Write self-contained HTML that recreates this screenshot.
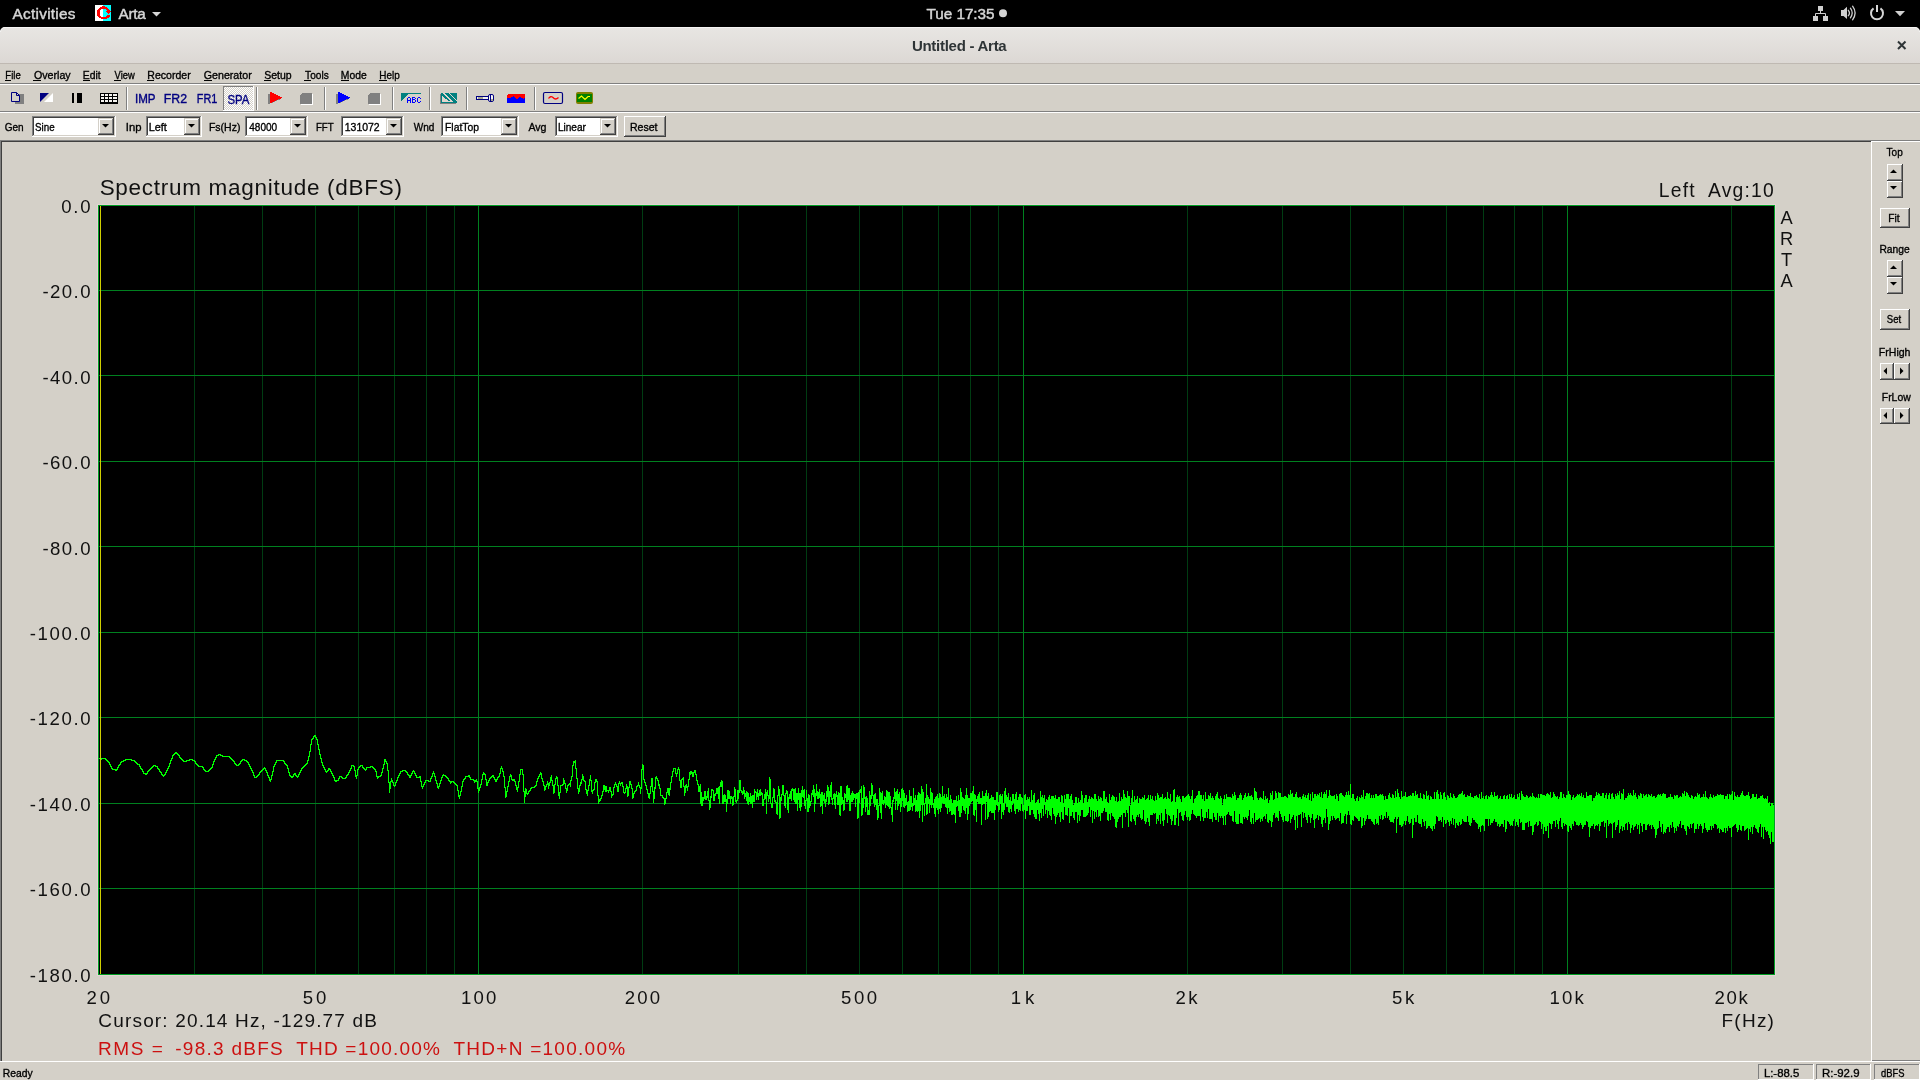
<!DOCTYPE html>
<html><head><meta charset="utf-8"><title>Untitled - Arta</title>
<style>html,body{margin:0;padding:0;width:1920px;height:1080px;overflow:hidden;background:#d4d0c8;font-family:"Liberation Sans",sans-serif}
text{font-family:"Liberation Sans",sans-serif}</style></head><body>
<svg width="1920" height="1080" viewBox="0 0 1920 1080" style="display:block;will-change:transform"><rect x="0" y="0" width="1920" height="1080" fill="#d4d0c8" />
<rect x="0" y="0" width="1920" height="36" fill="#000" />
<text x="12.60" y="19.00" font-size="15.3" fill="#d6d6d6" font-weight="normal" font-family="Liberation Sans" style="white-space:pre" textLength="62.90" lengthAdjust="spacing" stroke="#d6d6d6" stroke-width="0.45">Activities</text>
<rect x="95" y="5" width="8" height="16" fill="#ffffff" />
<rect x="103" y="5" width="8" height="16" fill="#00ffff" />
<rect x="102" y="6" width="3" height="1" fill="#ff0000" />
<rect x="100" y="7" width="7" height="1" fill="#ff0000" />
<rect x="99" y="8" width="9" height="1" fill="#ff0000" />
<rect x="98" y="9" width="3" height="1" fill="#ff0000" />
<rect x="106" y="9" width="3" height="1" fill="#ff0000" />
<rect x="97" y="10" width="3" height="1" fill="#ff0000" />
<rect x="107" y="10" width="3" height="1" fill="#ff0000" />
<rect x="97" y="11" width="3" height="1" fill="#ff0000" />
<rect x="106" y="11" width="5" height="1" fill="#ff0000" />
<rect x="97" y="12" width="3" height="1" fill="#ff0000" />
<rect x="107" y="12" width="3" height="1" fill="#ff0000" />
<rect x="97" y="13" width="3" height="1" fill="#ff0000" />
<rect x="108" y="13" width="1" height="1" fill="#ff0000" />
<rect x="97" y="14" width="3" height="1" fill="#ff0000" />
<rect x="97" y="15" width="3" height="1" fill="#ff0000" />
<rect x="107" y="15" width="3" height="1" fill="#ff0000" />
<rect x="98" y="16" width="3" height="1" fill="#ff0000" />
<rect x="106" y="16" width="4" height="1" fill="#ff0000" />
<rect x="99" y="17" width="10" height="1" fill="#ff0000" />
<rect x="101" y="18" width="6" height="1" fill="#ff0000" />
<text x="118.60" y="19.00" font-size="15.3" fill="#d6d6d6" font-weight="normal" font-family="Liberation Sans" style="white-space:pre" textLength="27.10" lengthAdjust="spacing" stroke="#d6d6d6" stroke-width="0.45">Arta</text>
<path d="M152 12 L161 12 L156.5 16.5 Z" fill="#d6d6d6"/>
<text x="926.60" y="19.00" font-size="15.3" fill="#d6d6d6" font-weight="normal" font-family="Liberation Sans" style="white-space:pre" textLength="67.90" lengthAdjust="spacing" stroke="#d6d6d6" stroke-width="0.45">Tue 17:35</text>
<circle cx="1003" cy="13.2" r="4" fill="#d6d6d6"/>
<rect x="1818" y="6" width="5" height="5" fill="#d0d0d0" />
<rect x="1813" y="16" width="5" height="5" fill="#d0d0d0" />
<rect x="1823" y="16" width="5" height="5" fill="#d0d0d0" />
<path d="M1820.5 11 V13.5 M1815.5 16 V13.5 H1825.5 V16" fill="none" stroke="#d0d0d0" stroke-width="1"/>
<path d="M1841 10 H1843.5 L1847 6.8 V19 L1843.5 16 H1841 Z" fill="#d0d0d0"/>
<path d="M1848.3 10.3 Q1850.6 13 1848.3 15.7 M1850.4 8.2 Q1854 13 1850.4 17.8 M1852.6 6.2 Q1857.6 13 1852.6 19.8" fill="none" stroke="#d0d0d0" stroke-width="1.3" stroke-linecap="round"/>
<path d="M1873.56 8.4 A6 6 0 1 0 1880.44 8.4" fill="none" stroke="#d6d6d6" stroke-width="2"/>
<path d="M1877 5 V12" stroke="#d6d6d6" stroke-width="2"/>
<path d="M1895 11 L1905 11 L1900 16.2 Z" fill="#d0d0d0"/>
<defs><linearGradient id="tg" x1="0" y1="0" x2="0" y2="1"><stop offset="0" stop-color="#e8e6e3"/><stop offset="1" stop-color="#dcd8d4"/></linearGradient></defs>
<path d="M0 63 V32 A5 5 0 0 1 5 27 H1915 A5 5 0 0 1 1920 32 V63 Z" fill="url(#tg)"/>
<path d="M0.5 32 A4.5 4.5 0 0 1 5 27.5 H1915 A4.5 4.5 0 0 1 1919.5 32" fill="none" stroke="#f6f5f4" stroke-width="1"/>
<rect x="0" y="63" width="1920" height="1" fill="#bfb9b2" />
<text x="911.90" y="51.00" font-size="15" fill="#2e3436" font-weight="bold" font-family="Liberation Sans" style="white-space:pre" textLength="94.80" lengthAdjust="spacing" >Untitled - Arta</text>
<path d="M1898 41.5 L1905.5 49 M1905.5 41.5 L1898 49" stroke="#2e3436" stroke-width="2"/>
<text x="5.30" y="79.00" font-size="11.5" fill="#000" font-weight="normal" font-family="Liberation Sans" style="white-space:pre" textLength="15.40" lengthAdjust="spacingAndGlyphs"  stroke="#000" stroke-width="0.35">File</text>
<rect x="5" y="80" width="6" height="1" fill="#000" />
<text x="33.95" y="79.00" font-size="11.5" fill="#000" font-weight="normal" font-family="Liberation Sans" style="white-space:pre" textLength="36.75" lengthAdjust="spacingAndGlyphs"  stroke="#000" stroke-width="0.35">Overlay</text>
<rect x="33" y="80" width="8" height="1" fill="#000" />
<text x="82.80" y="79.00" font-size="11.5" fill="#000" font-weight="normal" font-family="Liberation Sans" style="white-space:pre" textLength="17.90" lengthAdjust="spacingAndGlyphs"  stroke="#000" stroke-width="0.35">Edit</text>
<rect x="83" y="80" width="7" height="1" fill="#000" />
<text x="114.60" y="79.00" font-size="11.5" fill="#000" font-weight="normal" font-family="Liberation Sans" style="white-space:pre" textLength="20.10" lengthAdjust="spacingAndGlyphs"  stroke="#000" stroke-width="0.35">View</text>
<rect x="114" y="80" width="7" height="1" fill="#000" />
<text x="147.30" y="79.00" font-size="11.5" fill="#000" font-weight="normal" font-family="Liberation Sans" style="white-space:pre" textLength="43.40" lengthAdjust="spacingAndGlyphs"  stroke="#000" stroke-width="0.35">Recorder</text>
<rect x="147" y="80" width="7" height="1" fill="#000" />
<text x="203.80" y="79.00" font-size="11.5" fill="#000" font-weight="normal" font-family="Liberation Sans" style="white-space:pre" textLength="47.90" lengthAdjust="spacingAndGlyphs"  stroke="#000" stroke-width="0.35">Generator</text>
<rect x="204" y="80" width="8" height="1" fill="#000" />
<text x="264.30" y="79.00" font-size="11.5" fill="#000" font-weight="normal" font-family="Liberation Sans" style="white-space:pre" textLength="27.40" lengthAdjust="spacingAndGlyphs"  stroke="#000" stroke-width="0.35">Setup</text>
<rect x="264" y="80" width="7" height="1" fill="#000" />
<text x="305.10" y="79.00" font-size="11.5" fill="#000" font-weight="normal" font-family="Liberation Sans" style="white-space:pre" textLength="23.60" lengthAdjust="spacingAndGlyphs"  stroke="#000" stroke-width="0.35">Tools</text>
<rect x="304" y="80" width="7" height="1" fill="#000" />
<text x="340.80" y="79.00" font-size="11.5" fill="#000" font-weight="normal" font-family="Liberation Sans" style="white-space:pre" textLength="25.90" lengthAdjust="spacingAndGlyphs"  stroke="#000" stroke-width="0.35">Mode</text>
<rect x="341" y="80" width="8" height="1" fill="#000" />
<text x="379.30" y="79.00" font-size="11.5" fill="#000" font-weight="normal" font-family="Liberation Sans" style="white-space:pre" textLength="20.40" lengthAdjust="spacingAndGlyphs"  stroke="#000" stroke-width="0.35">Help</text>
<rect x="379" y="80" width="8" height="1" fill="#000" />
<rect x="0" y="83" width="1920" height="1" fill="#808080" />
<rect x="0" y="84" width="1920" height="1" fill="#ffffff" />
<rect x="15" y="94" width="9" height="10" fill="#808080" />
<path d="M11.5 92.5 H16.5 L19.5 95.5 V101.5 H11.5 Z" fill="#d4d0c8" stroke="#000080" stroke-width="1"/>
<path d="M16.5 92.5 V95.5 H19.5" fill="none" stroke="#000080" stroke-width="1"/>
<path d="M40 93 H49 L40 102 Z" fill="#000080"/>
<path d="M53 93 V102 H44 Z" fill="#ffffff"/>
<rect x="72" y="93" width="2" height="10" fill="#000" />
<rect x="77" y="93" width="5" height="10" fill="#000" />
<rect x="100" y="93" width="18" height="11" fill="#000" />
<rect x="101" y="94" width="3" height="2" fill="#f4f2ee" />
<rect x="101" y="97" width="3" height="2" fill="#f4f2ee" />
<rect x="101" y="100" width="3" height="2" fill="#f4f2ee" />
<rect x="105" y="94" width="3" height="2" fill="#f4f2ee" />
<rect x="105" y="97" width="3" height="2" fill="#f4f2ee" />
<rect x="105" y="100" width="3" height="2" fill="#f4f2ee" />
<rect x="109" y="94" width="3" height="2" fill="#f4f2ee" />
<rect x="109" y="97" width="3" height="2" fill="#f4f2ee" />
<rect x="109" y="100" width="3" height="2" fill="#f4f2ee" />
<rect x="113" y="94" width="4" height="2" fill="#f4f2ee" />
<rect x="113" y="97" width="4" height="2" fill="#f4f2ee" />
<rect x="113" y="100" width="4" height="2" fill="#f4f2ee" />
<rect x="126" y="87" width="1" height="23" fill="#808080" />
<rect x="127" y="87" width="1" height="23" fill="#ffffff" />
<text x="134.95" y="102.60" font-size="12" fill="#000080" font-weight="normal" font-family="Liberation Sans" style="white-space:pre" textLength="20.55" lengthAdjust="spacingAndGlyphs"  stroke="#000080" stroke-width="0.35">IMP</text>
<text x="163.82" y="102.60" font-size="12" fill="#000080" font-weight="normal" font-family="Liberation Sans" style="white-space:pre" textLength="23.24" lengthAdjust="spacingAndGlyphs"  stroke="#000080" stroke-width="0.35">FR2</text>
<text x="196.80" y="102.60" font-size="12" fill="#000080" font-weight="normal" font-family="Liberation Sans" style="white-space:pre" textLength="20.44" lengthAdjust="spacingAndGlyphs"  stroke="#000080" stroke-width="0.35">FR1</text>
<defs><pattern id="dith" width="2" height="2" patternUnits="userSpaceOnUse"><rect width="2" height="2" fill="#d4d0c8"/><rect width="1" height="1" fill="#ffffff"/><rect x="1" y="1" width="1" height="1" fill="#ffffff"/></pattern></defs>
<rect x="223" y="86" width="31" height="25" fill="url(#dith)" />
<rect x="223" y="86" width="31" height="1" fill="#808080" />
<rect x="223" y="86" width="1" height="25" fill="#808080" />
<rect x="223" y="110" width="31" height="1" fill="#ffffff" />
<rect x="253" y="86" width="1" height="25" fill="#ffffff" />
<text x="227.44" y="103.60" font-size="12" fill="#000080" font-weight="normal" font-family="Liberation Sans" style="white-space:pre" textLength="21.90" lengthAdjust="spacingAndGlyphs"  stroke="#000080" stroke-width="0.35">SPA</text>
<rect x="256" y="87" width="1" height="23" fill="#808080" />
<rect x="257" y="87" width="1" height="23" fill="#ffffff" />
<path d="M268 93.5 L281 99 L268 104.5 Z" fill="#808080" shape-rendering="crispEdges"/>
<path d="M270 91.8 L282.5 97.6 L270 103.4 Z" fill="#ff0000" shape-rendering="crispEdges"/>
<path d="M302 93 H312 V103 L311 104 H300 V95 Z" fill="#808080" shape-rendering="crispEdges"/>
<rect x="301" y="104" width="11" height="1" fill="#ffffff" />
<rect x="312" y="94" width="1" height="11" fill="#ffffff" />
<rect x="324" y="87" width="1" height="23" fill="#808080" />
<rect x="325" y="87" width="1" height="23" fill="#ffffff" />
<path d="M336 93.5 L349 99 L336 104.5 Z" fill="#808080" shape-rendering="crispEdges"/>
<path d="M338 91.8 L350.5 97.6 L338 103.4 Z" fill="#0000ff" shape-rendering="crispEdges"/>
<path d="M370 93 H380 V103 L379 104 H368 V95 Z" fill="#808080" shape-rendering="crispEdges"/>
<rect x="369" y="104" width="11" height="1" fill="#ffffff" />
<rect x="380" y="94" width="1" height="11" fill="#ffffff" />
<rect x="392" y="87" width="1" height="23" fill="#808080" />
<rect x="393" y="87" width="1" height="23" fill="#ffffff" />
<path d="M401 93 H409 L401 101 Z" fill="#008080" shape-rendering="crispEdges"/>
<rect x="401" y="93" width="20" height="1" fill="#008080" />
<rect x="408" y="97" width="1" height="1" fill="#0000ff" />
<rect x="409" y="97" width="1" height="1" fill="#0000ff" />
<rect x="407" y="98" width="1" height="1" fill="#0000ff" />
<rect x="410" y="98" width="1" height="1" fill="#0000ff" />
<rect x="407" y="99" width="1" height="1" fill="#0000ff" />
<rect x="410" y="99" width="1" height="1" fill="#0000ff" />
<rect x="407" y="100" width="1" height="1" fill="#0000ff" />
<rect x="408" y="100" width="1" height="1" fill="#0000ff" />
<rect x="409" y="100" width="1" height="1" fill="#0000ff" />
<rect x="410" y="100" width="1" height="1" fill="#0000ff" />
<rect x="407" y="101" width="1" height="1" fill="#0000ff" />
<rect x="410" y="101" width="1" height="1" fill="#0000ff" />
<rect x="407" y="102" width="1" height="1" fill="#0000ff" />
<rect x="410" y="102" width="1" height="1" fill="#0000ff" />
<rect x="412" y="97" width="1" height="1" fill="#0000ff" />
<rect x="413" y="97" width="1" height="1" fill="#0000ff" />
<rect x="414" y="97" width="1" height="1" fill="#0000ff" />
<rect x="412" y="98" width="1" height="1" fill="#0000ff" />
<rect x="415" y="98" width="1" height="1" fill="#0000ff" />
<rect x="412" y="99" width="1" height="1" fill="#0000ff" />
<rect x="413" y="99" width="1" height="1" fill="#0000ff" />
<rect x="414" y="99" width="1" height="1" fill="#0000ff" />
<rect x="412" y="100" width="1" height="1" fill="#0000ff" />
<rect x="415" y="100" width="1" height="1" fill="#0000ff" />
<rect x="412" y="101" width="1" height="1" fill="#0000ff" />
<rect x="415" y="101" width="1" height="1" fill="#0000ff" />
<rect x="412" y="102" width="1" height="1" fill="#0000ff" />
<rect x="413" y="102" width="1" height="1" fill="#0000ff" />
<rect x="414" y="102" width="1" height="1" fill="#0000ff" />
<rect x="418" y="97" width="1" height="1" fill="#0000ff" />
<rect x="419" y="97" width="1" height="1" fill="#0000ff" />
<rect x="417" y="98" width="1" height="1" fill="#0000ff" />
<rect x="420" y="98" width="1" height="1" fill="#0000ff" />
<rect x="417" y="99" width="1" height="1" fill="#0000ff" />
<rect x="417" y="100" width="1" height="1" fill="#0000ff" />
<rect x="417" y="101" width="1" height="1" fill="#0000ff" />
<rect x="420" y="101" width="1" height="1" fill="#0000ff" />
<rect x="418" y="102" width="1" height="1" fill="#0000ff" />
<rect x="419" y="102" width="1" height="1" fill="#0000ff" />
<rect x="429" y="87" width="1" height="23" fill="#808080" />
<rect x="430" y="87" width="1" height="23" fill="#ffffff" />
<rect x="440" y="94" width="16" height="10" fill="#808080" />
<rect x="441" y="93" width="16" height="10" fill="#008080" />
<rect x="443" y="93" width="2" height="1" fill="#e0d6ce" />
<rect x="449" y="93" width="1" height="1" fill="#e0d6ce" />
<rect x="444" y="94" width="2" height="1" fill="#e0d6ce" />
<rect x="450" y="94" width="1" height="1" fill="#e0d6ce" />
<rect x="445" y="95" width="2" height="1" fill="#e0d6ce" />
<rect x="451" y="95" width="1" height="1" fill="#e0d6ce" />
<rect x="442" y="96" width="1" height="1" fill="#e0d6ce" />
<rect x="446" y="96" width="2" height="1" fill="#e0d6ce" />
<rect x="452" y="96" width="1" height="1" fill="#e0d6ce" />
<rect x="442" y="97" width="2" height="1" fill="#e0d6ce" />
<rect x="447" y="97" width="2" height="1" fill="#e0d6ce" />
<rect x="453" y="97" width="1" height="1" fill="#e0d6ce" />
<rect x="442" y="98" width="3" height="1" fill="#e0d6ce" />
<rect x="448" y="98" width="2" height="1" fill="#e0d6ce" />
<rect x="454" y="98" width="1" height="1" fill="#e0d6ce" />
<rect x="442" y="99" width="5" height="1" fill="#e0d6ce" />
<rect x="449" y="99" width="2" height="1" fill="#e0d6ce" />
<rect x="455" y="99" width="1" height="1" fill="#e0d6ce" />
<rect x="442" y="100" width="6" height="1" fill="#e0d6ce" />
<rect x="450" y="100" width="2" height="1" fill="#e0d6ce" />
<rect x="456" y="100" width="1" height="1" fill="#e0d6ce" />
<rect x="442" y="101" width="11" height="1" fill="#e0d6ce" />
<rect x="466" y="87" width="1" height="23" fill="#808080" />
<rect x="467" y="87" width="1" height="23" fill="#ffffff" />
<rect x="476.5" y="96.5" width="12" height="3" fill="#f0f0f0" stroke="#000080" stroke-width="1"/>
<rect x="478" y="97" width="5" height="2" fill="#a8a890" />
<rect x="488.5" y="94.5" width="5" height="7" rx="1.5" fill="#f4f4f4" stroke="#000080" stroke-width="1"/>
<rect x="490" y="94" width="1" height="8" fill="#000080" />
<rect x="491" y="99" width="2" height="2" fill="#a8a890" />
<path d="M507 95 L508 94 H524 L525 95 V103 H507 Z" fill="#0000ff" shape-rendering="crispEdges"/>
<path d="M508 94 H524 L525 95 V97 L524 98 L523 99 L522 97 L521 98 L520 96.5 L518.5 98 L517 99.5 L515.5 97.5 L513.5 96 L511.5 97.5 L510 98 L508 98 L507 98 V95 Z" fill="#ff0000" shape-rendering="crispEdges"/>
<rect x="534" y="87" width="1" height="23" fill="#808080" />
<rect x="535" y="87" width="1" height="23" fill="#ffffff" />
<rect x="543.5" y="92.5" width="19" height="11" rx="1.5" fill="#d4d0c8" stroke="#000080" stroke-width="1.2"/>
<path d="M548.5 98.5 Q550.5 95.5 553 97.5 Q555.5 100.5 558.5 97.5" fill="none" stroke="#ff0000" stroke-width="1.3"/>
<rect x="576" y="92" width="17" height="12" rx="2" fill="#808000"/>
<rect x="577" y="94" width="15" height="8" fill="#008000" />
<path d="M578.5 98.5 L581.5 96 L585 99.5 L588 96.5 L590 96.5" fill="none" stroke="#ffff00" stroke-width="1.2"/>
<rect x="0" y="111" width="1920" height="1" fill="#808080" />
<rect x="0" y="112" width="1920" height="1" fill="#ffffff" />
<text x="4.75" y="130.90" font-size="11.5" fill="#000" font-weight="normal" font-family="Liberation Sans" style="white-space:pre" textLength="18.93" lengthAdjust="spacingAndGlyphs"  stroke="#000" stroke-width="0.35">Gen</text>
<rect x="32" y="116" width="84" height="21" fill="#ffffff" />
<rect x="32" y="116" width="84" height="1" fill="#808080" />
<rect x="32" y="116" width="1" height="21" fill="#808080" />
<rect x="32" y="136" width="84" height="1" fill="#ffffff" />
<rect x="115" y="116" width="1" height="21" fill="#ffffff" />
<rect x="33" y="117" width="82" height="1" fill="#404040" />
<rect x="33" y="117" width="1" height="19" fill="#404040" />
<rect x="33" y="135" width="82" height="1" fill="#d4d0c8" />
<rect x="114" y="117" width="1" height="19" fill="#d4d0c8" />
<rect x="98" y="118" width="16" height="17" fill="#d4d0c8" />
<rect x="99" y="119" width="14" height="1" fill="#ffffff" />
<rect x="99" y="119" width="1" height="15" fill="#ffffff" />
<rect x="98" y="134" width="16" height="1" fill="#404040" />
<rect x="113" y="118" width="1" height="17" fill="#404040" />
<rect x="99" y="133" width="14" height="1" fill="#808080" />
<rect x="112" y="119" width="1" height="15" fill="#808080" />
<path d="M102 124 H109 L105.5 127.5 Z" fill="#000"/>
<text x="35.08" y="130.90" font-size="11.5" fill="#000" font-weight="normal" font-family="Liberation Sans" style="white-space:pre" textLength="19.62" lengthAdjust="spacingAndGlyphs"  stroke="#000" stroke-width="0.35">Sine</text>
<text x="125.82" y="130.90" font-size="11.5" fill="#000" font-weight="normal" font-family="Liberation Sans" style="white-space:pre" textLength="15.70" lengthAdjust="spacingAndGlyphs"  stroke="#000" stroke-width="0.35">Inp</text>
<rect x="146" y="116" width="56" height="21" fill="#ffffff" />
<rect x="146" y="116" width="56" height="1" fill="#808080" />
<rect x="146" y="116" width="1" height="21" fill="#808080" />
<rect x="146" y="136" width="56" height="1" fill="#ffffff" />
<rect x="201" y="116" width="1" height="21" fill="#ffffff" />
<rect x="147" y="117" width="54" height="1" fill="#404040" />
<rect x="147" y="117" width="1" height="19" fill="#404040" />
<rect x="147" y="135" width="54" height="1" fill="#d4d0c8" />
<rect x="200" y="117" width="1" height="19" fill="#d4d0c8" />
<rect x="184" y="118" width="16" height="17" fill="#d4d0c8" />
<rect x="185" y="119" width="14" height="1" fill="#ffffff" />
<rect x="185" y="119" width="1" height="15" fill="#ffffff" />
<rect x="184" y="134" width="16" height="1" fill="#404040" />
<rect x="199" y="118" width="1" height="17" fill="#404040" />
<rect x="185" y="133" width="14" height="1" fill="#808080" />
<rect x="198" y="119" width="1" height="15" fill="#808080" />
<path d="M188 124 H195 L191.5 127.5 Z" fill="#000"/>
<text x="148.72" y="130.90" font-size="11.5" fill="#000" font-weight="normal" font-family="Liberation Sans" style="white-space:pre" textLength="18.08" lengthAdjust="spacingAndGlyphs"  stroke="#000" stroke-width="0.35">Left</text>
<text x="208.90" y="130.90" font-size="11.5" fill="#000" font-weight="normal" font-family="Liberation Sans" style="white-space:pre" textLength="31.52" lengthAdjust="spacingAndGlyphs"  stroke="#000" stroke-width="0.35">Fs(Hz)</text>
<rect x="245" y="116" width="63" height="21" fill="#ffffff" />
<rect x="245" y="116" width="63" height="1" fill="#808080" />
<rect x="245" y="116" width="1" height="21" fill="#808080" />
<rect x="245" y="136" width="63" height="1" fill="#ffffff" />
<rect x="307" y="116" width="1" height="21" fill="#ffffff" />
<rect x="246" y="117" width="61" height="1" fill="#404040" />
<rect x="246" y="117" width="1" height="19" fill="#404040" />
<rect x="246" y="135" width="61" height="1" fill="#d4d0c8" />
<rect x="306" y="117" width="1" height="19" fill="#d4d0c8" />
<rect x="290" y="118" width="16" height="17" fill="#d4d0c8" />
<rect x="291" y="119" width="14" height="1" fill="#ffffff" />
<rect x="291" y="119" width="1" height="15" fill="#ffffff" />
<rect x="290" y="134" width="16" height="1" fill="#404040" />
<rect x="305" y="118" width="1" height="17" fill="#404040" />
<rect x="291" y="133" width="14" height="1" fill="#808080" />
<rect x="304" y="119" width="1" height="15" fill="#808080" />
<path d="M294 124 H301 L297.5 127.5 Z" fill="#000"/>
<text x="249.25" y="130.90" font-size="11.5" fill="#000" font-weight="normal" font-family="Liberation Sans" style="white-space:pre" textLength="27.85" lengthAdjust="spacingAndGlyphs"  stroke="#000" stroke-width="0.35">48000</text>
<text x="315.90" y="130.90" font-size="11.5" fill="#000" font-weight="normal" font-family="Liberation Sans" style="white-space:pre" textLength="17.80" lengthAdjust="spacingAndGlyphs"  stroke="#000" stroke-width="0.35">FFT</text>
<rect x="341" y="116" width="63" height="21" fill="#ffffff" />
<rect x="341" y="116" width="63" height="1" fill="#808080" />
<rect x="341" y="116" width="1" height="21" fill="#808080" />
<rect x="341" y="136" width="63" height="1" fill="#ffffff" />
<rect x="403" y="116" width="1" height="21" fill="#ffffff" />
<rect x="342" y="117" width="61" height="1" fill="#404040" />
<rect x="342" y="117" width="1" height="19" fill="#404040" />
<rect x="342" y="135" width="61" height="1" fill="#d4d0c8" />
<rect x="402" y="117" width="1" height="19" fill="#d4d0c8" />
<rect x="386" y="118" width="16" height="17" fill="#d4d0c8" />
<rect x="387" y="119" width="14" height="1" fill="#ffffff" />
<rect x="387" y="119" width="1" height="15" fill="#ffffff" />
<rect x="386" y="134" width="16" height="1" fill="#404040" />
<rect x="401" y="118" width="1" height="17" fill="#404040" />
<rect x="387" y="133" width="14" height="1" fill="#808080" />
<rect x="400" y="119" width="1" height="15" fill="#808080" />
<path d="M390 124 H397 L393.5 127.5 Z" fill="#000"/>
<text x="344.72" y="130.90" font-size="11.5" fill="#000" font-weight="normal" font-family="Liberation Sans" style="white-space:pre" textLength="34.98" lengthAdjust="spacingAndGlyphs"  stroke="#000" stroke-width="0.35">131072</text>
<text x="413.78" y="130.90" font-size="11.5" fill="#000" font-weight="normal" font-family="Liberation Sans" style="white-space:pre" textLength="20.64" lengthAdjust="spacingAndGlyphs"  stroke="#000" stroke-width="0.35">Wnd</text>
<rect x="441" y="116" width="78" height="21" fill="#ffffff" />
<rect x="441" y="116" width="78" height="1" fill="#808080" />
<rect x="441" y="116" width="1" height="21" fill="#808080" />
<rect x="441" y="136" width="78" height="1" fill="#ffffff" />
<rect x="518" y="116" width="1" height="21" fill="#ffffff" />
<rect x="442" y="117" width="76" height="1" fill="#404040" />
<rect x="442" y="117" width="1" height="19" fill="#404040" />
<rect x="442" y="135" width="76" height="1" fill="#d4d0c8" />
<rect x="517" y="117" width="1" height="19" fill="#d4d0c8" />
<rect x="501" y="118" width="16" height="17" fill="#d4d0c8" />
<rect x="502" y="119" width="14" height="1" fill="#ffffff" />
<rect x="502" y="119" width="1" height="15" fill="#ffffff" />
<rect x="501" y="134" width="16" height="1" fill="#404040" />
<rect x="516" y="118" width="1" height="17" fill="#404040" />
<rect x="502" y="133" width="14" height="1" fill="#808080" />
<rect x="515" y="119" width="1" height="15" fill="#808080" />
<path d="M505 124 H512 L508.5 127.5 Z" fill="#000"/>
<text x="445.00" y="130.90" font-size="11.5" fill="#000" font-weight="normal" font-family="Liberation Sans" style="white-space:pre" textLength="34.00" lengthAdjust="spacingAndGlyphs"  stroke="#000" stroke-width="0.35">FlatTop</text>
<text x="528.42" y="130.90" font-size="11.5" fill="#000" font-weight="normal" font-family="Liberation Sans" style="white-space:pre" textLength="18.13" lengthAdjust="spacingAndGlyphs"  stroke="#000" stroke-width="0.35">Avg</text>
<rect x="555" y="116" width="63" height="21" fill="#ffffff" />
<rect x="555" y="116" width="63" height="1" fill="#808080" />
<rect x="555" y="116" width="1" height="21" fill="#808080" />
<rect x="555" y="136" width="63" height="1" fill="#ffffff" />
<rect x="617" y="116" width="1" height="21" fill="#ffffff" />
<rect x="556" y="117" width="61" height="1" fill="#404040" />
<rect x="556" y="117" width="1" height="19" fill="#404040" />
<rect x="556" y="135" width="61" height="1" fill="#d4d0c8" />
<rect x="616" y="117" width="1" height="19" fill="#d4d0c8" />
<rect x="600" y="118" width="16" height="17" fill="#d4d0c8" />
<rect x="601" y="119" width="14" height="1" fill="#ffffff" />
<rect x="601" y="119" width="1" height="15" fill="#ffffff" />
<rect x="600" y="134" width="16" height="1" fill="#404040" />
<rect x="615" y="118" width="1" height="17" fill="#404040" />
<rect x="601" y="133" width="14" height="1" fill="#808080" />
<rect x="614" y="119" width="1" height="15" fill="#808080" />
<path d="M604 124 H611 L607.5 127.5 Z" fill="#000"/>
<text x="557.90" y="130.90" font-size="11.5" fill="#000" font-weight="normal" font-family="Liberation Sans" style="white-space:pre" textLength="28.08" lengthAdjust="spacingAndGlyphs"  stroke="#000" stroke-width="0.35">Linear</text>
<rect x="624" y="116" width="42" height="21" fill="#d4d0c8" />
<rect x="624" y="116" width="42" height="1" fill="#ffffff" />
<rect x="624" y="116" width="1" height="21" fill="#ffffff" />
<rect x="624" y="136" width="42" height="1" fill="#404040" />
<rect x="665" y="116" width="1" height="21" fill="#404040" />
<rect x="625" y="135" width="40" height="1" fill="#808080" />
<rect x="664" y="117" width="1" height="19" fill="#808080" />
<text x="629.95" y="130.90" font-size="11.5" fill="#000" font-weight="normal" font-family="Liberation Sans" style="white-space:pre" textLength="27.57" lengthAdjust="spacingAndGlyphs"  stroke="#000" stroke-width="0.35">Reset</text>
<rect x="0" y="140" width="1871" height="1" fill="#808080" />
<rect x="0" y="140" width="1" height="921" fill="#808080" />
<rect x="1" y="141" width="1870" height="1" fill="#404040" />
<rect x="1" y="141" width="1" height="920" fill="#404040" />
<rect x="97" y="204" width="1679" height="772" fill="#e4d4d4" />
<rect x="98" y="205" width="1677" height="770" fill="#000" />
<rect x="194" y="206" width="1" height="768" fill="#003c12" />
<rect x="262" y="206" width="1" height="768" fill="#003c12" />
<rect x="315" y="206" width="1" height="768" fill="#003c12" />
<rect x="358" y="206" width="1" height="768" fill="#003c12" />
<rect x="394" y="206" width="1" height="768" fill="#003c12" />
<rect x="426" y="206" width="1" height="768" fill="#003c12" />
<rect x="454" y="206" width="1" height="768" fill="#003c12" />
<rect x="478" y="206" width="1" height="768" fill="#00801f" />
<rect x="642" y="206" width="1" height="768" fill="#003c12" />
<rect x="738" y="206" width="1" height="768" fill="#003c12" />
<rect x="806" y="206" width="1" height="768" fill="#003c12" />
<rect x="859" y="206" width="1" height="768" fill="#003c12" />
<rect x="902" y="206" width="1" height="768" fill="#003c12" />
<rect x="938" y="206" width="1" height="768" fill="#003c12" />
<rect x="970" y="206" width="1" height="768" fill="#003c12" />
<rect x="998" y="206" width="1" height="768" fill="#003c12" />
<rect x="1023" y="206" width="1" height="768" fill="#00801f" />
<rect x="1187" y="206" width="1" height="768" fill="#003c12" />
<rect x="1282" y="206" width="1" height="768" fill="#003c12" />
<rect x="1350" y="206" width="1" height="768" fill="#003c12" />
<rect x="1403" y="206" width="1" height="768" fill="#003c12" />
<rect x="1446" y="206" width="1" height="768" fill="#003c12" />
<rect x="1483" y="206" width="1" height="768" fill="#003c12" />
<rect x="1514" y="206" width="1" height="768" fill="#003c12" />
<rect x="1542" y="206" width="1" height="768" fill="#003c12" />
<rect x="1567" y="206" width="1" height="768" fill="#00801f" />
<rect x="1731" y="206" width="1" height="768" fill="#003c12" />
<rect x="99" y="290" width="1675" height="1" fill="#00801f" />
<rect x="99" y="375" width="1675" height="1" fill="#00801f" />
<rect x="99" y="461" width="1675" height="1" fill="#00801f" />
<rect x="99" y="546" width="1675" height="1" fill="#00801f" />
<rect x="99" y="632" width="1675" height="1" fill="#00801f" />
<rect x="99" y="717" width="1675" height="1" fill="#00801f" />
<rect x="99" y="803" width="1675" height="1" fill="#00801f" />
<rect x="99" y="888" width="1675" height="1" fill="#00801f" />
<path d="M99 758h1v1h-1zM100 758h1v2h-1zM101 758h1v2h-1zM102 758h1v1h-1zM103 758h1v1h-1zM104 758h1v1h-1zM105 758h1v2h-1zM106 759h1v2h-1zM107 760h1v2h-1zM108 761h1v2h-1zM109 762h1v3h-1zM110 764h1v3h-1zM111 766h1v3h-1zM112 768h1v2h-1zM113 769h1v1h-1zM114 769h1v1h-1zM115 769h1v2h-1zM116 769h1v2h-1zM117 767h1v3h-1zM118 765h1v3h-1zM119 764h1v2h-1zM120 762h1v3h-1zM121 761h1v2h-1zM122 761h1v1h-1zM123 760h1v2h-1zM124 760h1v1h-1zM125 759h1v2h-1zM126 759h1v1h-1zM127 759h1v1h-1zM128 759h1v1h-1zM129 759h1v1h-1zM130 759h1v1h-1zM131 759h1v2h-1zM132 760h1v1h-1zM133 760h1v1h-1zM134 760h1v2h-1zM135 761h1v2h-1zM136 762h1v2h-1zM137 763h1v2h-1zM138 764h1v1h-1zM139 764h1v3h-1zM140 766h1v3h-1zM141 768h1v2h-1zM142 769h1v3h-1zM143 771h1v3h-1zM144 773h1v1h-1zM145 773h1v2h-1zM146 773h1v2h-1zM147 771h1v3h-1zM148 770h1v2h-1zM149 769h1v2h-1zM150 768h1v2h-1zM151 767h1v2h-1zM152 766h1v2h-1zM153 765h1v2h-1zM154 765h1v1h-1zM155 765h1v2h-1zM156 766h1v1h-1zM157 766h1v3h-1zM158 768h1v2h-1zM159 769h1v3h-1zM160 771h1v2h-1zM161 772h1v3h-1zM162 774h1v2h-1zM163 775h1v2h-1zM164 774h1v2h-1zM165 772h1v3h-1zM166 770h1v3h-1zM167 768h1v3h-1zM168 766h1v3h-1zM169 763h1v4h-1zM170 760h1v4h-1zM171 758h1v3h-1zM172 755h1v4h-1zM173 754h1v2h-1zM174 753h1v2h-1zM175 752h1v2h-1zM176 752h1v2h-1zM177 753h1v2h-1zM178 754h1v2h-1zM179 755h1v3h-1zM180 757h1v2h-1zM181 758h1v2h-1zM182 759h1v2h-1zM183 760h1v2h-1zM184 761h1v1h-1zM185 761h1v1h-1zM186 760h1v2h-1zM187 760h1v1h-1zM188 760h1v1h-1zM189 759h1v2h-1zM190 759h1v1h-1zM191 759h1v1h-1zM192 759h1v2h-1zM193 760h1v1h-1zM194 760h1v2h-1zM195 761h1v3h-1zM196 763h1v2h-1zM197 764h1v2h-1zM198 765h1v2h-1zM199 766h1v1h-1zM200 766h1v1h-1zM201 766h1v1h-1zM202 766h1v2h-1zM203 767h1v3h-1zM204 769h1v2h-1zM205 770h1v2h-1zM206 771h1v1h-1zM207 771h1v1h-1zM208 770h1v2h-1zM209 769h1v2h-1zM210 768h1v2h-1zM211 767h1v2h-1zM212 764h1v4h-1zM213 761h1v4h-1zM214 759h1v3h-1zM215 757h1v3h-1zM216 755h1v3h-1zM217 755h1v1h-1zM218 754h1v2h-1zM219 754h1v1h-1zM220 754h1v2h-1zM221 755h1v1h-1zM222 755h1v2h-1zM223 756h1v1h-1zM224 756h1v1h-1zM225 756h1v1h-1zM226 756h1v1h-1zM227 756h1v1h-1zM228 756h1v1h-1zM229 756h1v2h-1zM230 757h1v2h-1zM231 758h1v2h-1zM232 759h1v2h-1zM233 760h1v2h-1zM234 761h1v3h-1zM235 763h1v2h-1zM236 764h1v2h-1zM237 765h1v1h-1zM238 764h1v2h-1zM239 763h1v2h-1zM240 761h1v3h-1zM241 760h1v2h-1zM242 759h1v2h-1zM243 759h1v1h-1zM244 759h1v2h-1zM245 760h1v1h-1zM246 760h1v2h-1zM247 761h1v2h-1zM248 762h1v3h-1zM249 764h1v3h-1zM250 766h1v3h-1zM251 768h1v3h-1zM252 770h1v3h-1zM253 772h1v4h-1zM254 775h1v3h-1zM255 777h1v1h-1zM256 776h1v2h-1zM257 775h1v2h-1zM258 774h1v2h-1zM259 772h1v3h-1zM260 771h1v2h-1zM261 770h1v2h-1zM262 769h1v2h-1zM263 768h1v2h-1zM264 767h1v2h-1zM265 768h1v3h-1zM266 770h1v3h-1zM267 772h1v4h-1zM268 775h1v3h-1zM269 777h1v4h-1zM270 779h1v3h-1zM271 775h1v5h-1zM272 771h1v5h-1zM273 766h1v6h-1zM274 764h1v3h-1zM275 762h1v3h-1zM276 760h1v3h-1zM277 760h1v1h-1zM278 760h1v1h-1zM279 760h1v1h-1zM280 760h1v1h-1zM281 760h1v1h-1zM282 760h1v1h-1zM283 760h1v2h-1zM284 761h1v3h-1zM285 763h1v2h-1zM286 764h1v2h-1zM287 765h1v4h-1zM288 768h1v5h-1zM289 772h1v4h-1zM290 775h1v2h-1zM291 776h1v2h-1zM292 776h1v2h-1zM293 774h1v3h-1zM294 773h1v2h-1zM295 773h1v3h-1zM296 775h1v2h-1zM297 776h1v2h-1zM298 774h1v3h-1zM299 772h1v3h-1zM300 770h1v3h-1zM301 768h1v3h-1zM302 767h1v2h-1zM303 766h1v2h-1zM304 765h1v2h-1zM305 764h1v2h-1zM306 763h1v2h-1zM307 760h1v4h-1zM308 756h1v5h-1zM309 751h1v6h-1zM310 744h1v8h-1zM311 739h1v6h-1zM312 738h1v2h-1zM313 736h1v3h-1zM314 735h1v2h-1zM315 735h1v3h-1zM316 737h1v3h-1zM317 739h1v6h-1zM318 744h1v6h-1zM319 749h1v6h-1zM320 754h1v5h-1zM321 758h1v5h-1zM322 762h1v4h-1zM323 765h1v3h-1zM324 767h1v3h-1zM325 769h1v3h-1zM326 771h1v2h-1zM327 770h1v2h-1zM328 768h1v3h-1zM329 768h1v2h-1zM330 769h1v3h-1zM331 771h1v3h-1zM332 773h1v3h-1zM333 775h1v3h-1zM334 777h1v4h-1zM335 780h1v2h-1zM336 780h1v2h-1zM337 780h1v1h-1zM338 778h1v3h-1zM339 776h1v3h-1zM340 776h1v1h-1zM341 776h1v2h-1zM342 777h1v2h-1zM343 778h1v1h-1zM344 778h1v1h-1zM345 777h1v2h-1zM346 775h1v3h-1zM347 774h1v2h-1zM348 772h1v3h-1zM349 770h1v3h-1zM350 768h1v3h-1zM351 765h1v4h-1zM352 765h1v1h-1zM353 765h1v2h-1zM354 766h1v5h-1zM355 770h1v7h-1zM356 775h1v4h-1zM357 769h1v7h-1zM358 767h1v3h-1zM359 766h1v2h-1zM360 765h1v2h-1zM361 765h1v1h-1zM362 765h1v3h-1zM363 767h1v2h-1zM364 768h1v2h-1zM365 769h1v2h-1zM366 767h1v3h-1zM367 767h1v1h-1zM368 767h1v1h-1zM369 767h1v1h-1zM370 766h1v2h-1zM371 766h1v1h-1zM372 766h1v2h-1zM373 767h1v2h-1zM374 768h1v2h-1zM375 769h1v3h-1zM376 771h1v6h-1zM377 776h1v3h-1zM378 776h1v2h-1zM379 776h1v1h-1zM380 775h1v2h-1zM381 772h1v4h-1zM382 768h1v5h-1zM383 764h1v5h-1zM384 759h1v6h-1zM385 759h1v3h-1zM386 761h1v3h-1zM387 763h1v8h-1zM388 770h1v13h-1zM389 782h1v11h-1zM390 781h1v8h-1zM391 778h1v4h-1zM392 780h1v3h-1zM393 782h1v4h-1zM394 785h1v2h-1zM395 782h1v4h-1zM396 780h1v3h-1zM397 777h1v4h-1zM398 775h1v3h-1zM399 773h1v3h-1zM400 771h1v3h-1zM401 771h1v1h-1zM402 770h1v2h-1zM403 770h1v1h-1zM404 770h1v1h-1zM405 770h1v2h-1zM406 771h1v2h-1zM407 772h1v3h-1zM408 774h1v2h-1zM409 775h1v3h-1zM410 775h1v3h-1zM411 773h1v3h-1zM412 771h1v3h-1zM413 770h1v2h-1zM414 771h1v3h-1zM415 773h1v3h-1zM416 775h1v3h-1zM417 777h1v1h-1zM418 777h1v1h-1zM419 776h1v2h-1zM420 776h1v6h-1zM421 781h1v6h-1zM422 786h1v3h-1zM423 784h1v3h-1zM424 782h1v3h-1zM425 780h1v3h-1zM426 780h1v1h-1zM427 780h1v1h-1zM428 780h1v2h-1zM429 781h1v1h-1zM430 778h1v4h-1zM431 776h1v3h-1zM432 773h1v4h-1zM433 771h1v3h-1zM434 773h1v4h-1zM435 776h1v5h-1zM436 780h1v4h-1zM437 783h1v5h-1zM438 786h1v3h-1zM439 783h1v4h-1zM440 780h1v4h-1zM441 777h1v4h-1zM442 775h1v3h-1zM443 774h1v2h-1zM444 775h1v1h-1zM445 775h1v2h-1zM446 776h1v2h-1zM447 777h1v2h-1zM448 778h1v3h-1zM449 780h1v2h-1zM450 781h1v3h-1zM451 781h1v2h-1zM452 781h1v1h-1zM453 781h1v2h-1zM454 782h1v2h-1zM455 783h1v2h-1zM456 784h1v2h-1zM457 785h1v6h-1zM458 790h1v7h-1zM459 795h1v4h-1zM460 791h1v5h-1zM461 786h1v6h-1zM462 781h1v6h-1zM463 779h1v3h-1zM464 778h1v2h-1zM465 776h1v3h-1zM466 776h1v1h-1zM467 776h1v1h-1zM468 775h1v2h-1zM469 775h1v3h-1zM470 777h1v3h-1zM471 779h1v1h-1zM472 779h1v1h-1zM473 779h1v2h-1zM474 780h1v3h-1zM475 780h1v2h-1zM476 779h1v3h-1zM477 781h1v8h-1zM478 788h1v5h-1zM479 787h1v4h-1zM480 784h1v4h-1zM481 779h1v6h-1zM482 774h1v6h-1zM483 772h1v3h-1zM484 773h1v2h-1zM485 774h1v6h-1zM486 779h1v7h-1zM487 782h1v4h-1zM488 780h1v3h-1zM489 778h1v3h-1zM490 777h1v2h-1zM491 776h1v2h-1zM492 775h1v2h-1zM493 775h1v3h-1zM494 777h1v3h-1zM495 779h1v3h-1zM496 779h1v3h-1zM497 777h1v3h-1zM498 776h1v2h-1zM499 773h1v4h-1zM500 768h1v6h-1zM501 766h1v3h-1zM502 768h1v4h-1zM503 771h1v6h-1zM504 776h1v12h-1zM505 787h1v11h-1zM506 791h1v6h-1zM507 786h1v6h-1zM508 781h1v6h-1zM509 776h1v6h-1zM510 774h1v3h-1zM511 775h1v5h-1zM512 779h1v2h-1zM513 779h1v2h-1zM514 779h1v3h-1zM515 781h1v5h-1zM516 785h1v5h-1zM517 787h1v5h-1zM518 781h1v7h-1zM519 774h1v8h-1zM520 769h1v6h-1zM521 769h1v1h-1zM522 769h1v6h-1zM523 774h1v18h-1zM524 791h1v12h-1zM525 788h1v9h-1zM526 789h1v5h-1zM527 793h1v2h-1zM528 791h1v3h-1zM529 790h1v2h-1zM530 788h1v3h-1zM531 787h1v2h-1zM532 787h1v1h-1zM533 787h1v1h-1zM534 786h1v2h-1zM535 785h1v2h-1zM536 781h1v5h-1zM537 778h1v4h-1zM538 776h1v3h-1zM539 774h1v3h-1zM540 772h1v3h-1zM541 773h1v6h-1zM542 778h1v4h-1zM543 781h1v5h-1zM544 785h1v6h-1zM545 786h1v4h-1zM546 784h1v3h-1zM547 781h1v4h-1zM548 783h1v6h-1zM549 782h1v4h-1zM550 777h1v6h-1zM551 775h1v6h-1zM552 780h1v6h-1zM553 785h1v9h-1zM554 784h1v9h-1zM555 778h1v7h-1zM556 776h1v3h-1zM557 777h1v9h-1zM558 785h1v11h-1zM559 792h1v7h-1zM560 785h1v8h-1zM561 785h1v1h-1zM562 784h1v2h-1zM563 778h1v7h-1zM564 780h1v4h-1zM565 783h1v6h-1zM566 788h1v5h-1zM567 785h1v6h-1zM568 784h1v2h-1zM569 783h1v2h-1zM570 780h1v7h-1zM571 776h1v5h-1zM572 765h1v12h-1zM573 761h1v5h-1zM574 761h1v2h-1zM575 760h1v9h-1zM576 768h1v11h-1zM577 778h1v11h-1zM578 788h1v6h-1zM579 785h1v7h-1zM580 782h1v4h-1zM581 779h1v5h-1zM582 774h1v6h-1zM583 776h1v5h-1zM584 780h1v2h-1zM585 781h1v9h-1zM586 789h1v5h-1zM587 790h1v6h-1zM588 785h1v6h-1zM589 779h1v7h-1zM590 775h1v6h-1zM591 780h1v12h-1zM592 790h1v4h-1zM593 789h1v2h-1zM594 782h1v8h-1zM595 779h1v4h-1zM596 779h1v3h-1zM597 781h1v15h-1zM598 795h1v9h-1zM599 799h1v3h-1zM600 798h1v3h-1zM601 795h1v4h-1zM602 791h1v5h-1zM603 785h1v7h-1zM604 785h1v5h-1zM605 786h1v6h-1zM606 786h1v6h-1zM607 790h1v1h-1zM608 790h1v3h-1zM609 787h1v4h-1zM610 787h1v5h-1zM611 791h1v7h-1zM612 794h1v2h-1zM613 787h1v8h-1zM614 784h1v4h-1zM615 782h1v3h-1zM616 784h1v3h-1zM617 786h1v6h-1zM618 783h1v9h-1zM619 781h1v3h-1zM620 783h1v3h-1zM621 782h1v2h-1zM622 782h1v5h-1zM623 786h1v7h-1zM624 792h1v2h-1zM625 788h1v5h-1zM626 784h1v5h-1zM627 786h1v11h-1zM628 787h1v9h-1zM629 781h1v7h-1zM630 781h1v4h-1zM631 784h1v5h-1zM632 788h1v11h-1zM633 793h1v5h-1zM634 791h1v3h-1zM635 790h1v2h-1zM636 786h1v5h-1zM637 785h1v2h-1zM638 782h1v4h-1zM639 785h1v3h-1zM640 787h1v7h-1zM641 769h1v20h-1zM642 764h1v6h-1zM643 765h1v15h-1zM644 779h1v4h-1zM645 782h1v4h-1zM646 785h1v5h-1zM647 789h1v5h-1zM648 793h1v5h-1zM649 793h1v6h-1zM650 786h1v8h-1zM651 778h1v9h-1zM652 778h1v14h-1zM653 791h1v12h-1zM654 787h1v12h-1zM655 777h1v12h-1zM656 776h1v3h-1zM657 778h1v3h-1zM658 780h1v6h-1zM659 784h1v5h-1zM660 788h1v8h-1zM661 795h1v1h-1zM662 795h1v3h-1zM663 797h1v2h-1zM664 798h1v7h-1zM665 798h1v6h-1zM666 792h1v7h-1zM667 788h1v5h-1zM668 788h1v7h-1zM669 788h1v8h-1zM670 782h1v8h-1zM671 776h1v7h-1zM672 771h1v6h-1zM673 768h1v4h-1zM674 768h1v1h-1zM675 768h1v6h-1zM676 773h1v4h-1zM677 769h1v5h-1zM678 767h1v3h-1zM679 769h1v12h-1zM680 780h1v8h-1zM681 779h1v9h-1zM682 778h1v2h-1zM683 777h1v10h-1zM684 786h1v10h-1zM685 785h1v8h-1zM686 784h1v4h-1zM687 786h1v5h-1zM688 779h1v8h-1zM689 772h1v8h-1zM690 771h1v4h-1zM691 771h1v3h-1zM692 772h1v5h-1zM693 772h1v5h-1zM694 770h1v3h-1zM695 770h1v5h-1zM696 774h1v7h-1zM697 780h1v5h-1zM698 784h1v8h-1zM699 786h1v6h-1zM700 784h1v20h-1zM701 792h1v14h-1zM702 797h1v9h-1zM703 797h1v4h-1zM704 791h1v8h-1zM705 791h1v9h-1zM706 796h1v4h-1zM707 791h1v7h-1zM708 788h1v13h-1zM709 800h1v10h-1zM710 796h1v12h-1zM711 789h1v9h-1zM712 789h1v2h-1zM713 790h1v11h-1zM714 794h1v7h-1zM715 793h1v3h-1zM716 788h1v6h-1zM717 788h1v6h-1zM718 787h1v12h-1zM719 786h1v18h-1zM720 782h1v5h-1zM721 780h1v7h-1zM722 781h1v23h-1zM723 795h1v9h-1zM724 794h1v8h-1zM725 795h1v7h-1zM726 799h1v13h-1zM727 790h1v14h-1zM728 790h1v9h-1zM729 791h1v8h-1zM730 796h1v8h-1zM731 796h1v3h-1zM732 797h1v9h-1zM733 796h1v9h-1zM734 787h1v10h-1zM735 789h1v13h-1zM736 800h1v3h-1zM737 790h1v11h-1zM738 790h1v9h-1zM739 780h1v13h-1zM740 780h1v11h-1zM741 790h1v3h-1zM742 791h1v4h-1zM743 787h1v7h-1zM744 790h1v9h-1zM745 793h1v4h-1zM746 791h1v10h-1zM747 792h1v12h-1zM748 793h1v12h-1zM749 797h1v5h-1zM750 793h1v11h-1zM751 796h1v8h-1zM752 795h1v13h-1zM753 795h1v7h-1zM754 789h1v13h-1zM755 791h1v2h-1zM756 792h1v8h-1zM757 789h1v8h-1zM758 793h1v7h-1zM759 790h1v6h-1zM760 789h1v7h-1zM761 792h1v3h-1zM762 793h1v13h-1zM763 799h1v7h-1zM764 794h1v6h-1zM765 789h1v10h-1zM766 792h1v22h-1zM767 790h1v6h-1zM768 795h1v7h-1zM769 777h1v22h-1zM770 779h1v25h-1zM771 803h1v5h-1zM772 797h1v11h-1zM773 788h1v10h-1zM774 789h1v13h-1zM775 800h1v3h-1zM776 802h1v12h-1zM777 795h1v20h-1zM778 786h1v10h-1zM779 789h1v30h-1zM780 797h1v21h-1zM781 794h1v7h-1zM782 785h1v10h-1zM783 785h1v11h-1zM784 795h1v11h-1zM785 793h1v15h-1zM786 790h1v4h-1zM787 791h1v19h-1zM788 797h1v16h-1zM789 794h1v5h-1zM790 791h1v8h-1zM791 789h1v12h-1zM792 788h1v3h-1zM793 789h1v11h-1zM794 789h1v13h-1zM795 788h1v16h-1zM796 793h1v11h-1zM797 793h1v18h-1zM798 788h1v12h-1zM799 793h1v15h-1zM800 793h1v18h-1zM801 790h1v17h-1zM802 786h1v11h-1zM803 790h1v8h-1zM804 789h1v17h-1zM805 800h1v9h-1zM806 790h1v11h-1zM807 798h1v14h-1zM808 794h1v18h-1zM809 795h1v13h-1zM810 801h1v5h-1zM811 793h1v9h-1zM812 790h1v5h-1zM813 785h1v12h-1zM814 789h1v23h-1zM815 793h1v11h-1zM816 784h1v12h-1zM817 791h1v8h-1zM818 792h1v7h-1zM819 789h1v9h-1zM820 794h1v13h-1zM821 792h1v14h-1zM822 792h1v22h-1zM823 795h1v6h-1zM824 793h1v10h-1zM825 799h1v8h-1zM826 791h1v11h-1zM827 785h1v12h-1zM828 787h1v18h-1zM829 791h1v13h-1zM830 785h1v12h-1zM831 782h1v18h-1zM832 798h1v7h-1zM833 794h1v5h-1zM834 793h1v12h-1zM835 794h1v15h-1zM836 791h1v6h-1zM837 795h1v10h-1zM838 792h1v13h-1zM839 793h1v22h-1zM840 786h1v30h-1zM841 786h1v19h-1zM842 797h1v7h-1zM843 800h1v11h-1zM844 793h1v17h-1zM845 794h1v4h-1zM846 786h1v16h-1zM847 785h1v17h-1zM848 788h1v12h-1zM849 788h1v23h-1zM850 795h1v16h-1zM851 793h1v9h-1zM852 791h1v11h-1zM853 793h1v7h-1zM854 794h1v4h-1zM855 794h1v13h-1zM856 793h1v6h-1zM857 793h1v26h-1zM858 792h1v26h-1zM859 790h1v13h-1zM860 789h1v4h-1zM861 786h1v30h-1zM862 798h1v17h-1zM863 785h1v23h-1zM864 787h1v12h-1zM865 797h1v15h-1zM866 796h1v11h-1zM867 798h1v17h-1zM868 810h1v5h-1zM869 791h1v24h-1zM870 795h1v11h-1zM871 783h1v16h-1zM872 785h1v11h-1zM873 795h1v8h-1zM874 794h1v13h-1zM875 793h1v12h-1zM876 799h1v11h-1zM877 799h1v21h-1zM878 805h1v13h-1zM879 788h1v18h-1zM880 792h1v21h-1zM881 793h1v26h-1zM882 791h1v13h-1zM883 800h1v5h-1zM884 796h1v7h-1zM885 797h1v11h-1zM886 790h1v15h-1zM887 791h1v15h-1zM888 792h1v15h-1zM889 792h1v17h-1zM890 796h1v12h-1zM891 807h1v8h-1zM892 800h1v22h-1zM893 797h1v5h-1zM894 788h1v11h-1zM895 792h1v18h-1zM896 791h1v10h-1zM897 789h1v21h-1zM898 794h1v12h-1zM899 792h1v12h-1zM900 798h1v14h-1zM901 789h1v18h-1zM902 788h1v13h-1zM903 790h1v17h-1zM904 793h1v15h-1zM905 798h1v8h-1zM906 795h1v10h-1zM907 802h1v10h-1zM908 801h1v10h-1zM909 790h1v21h-1zM910 796h1v14h-1zM911 796h1v11h-1zM912 803h1v8h-1zM913 788h1v18h-1zM914 798h1v7h-1zM915 795h1v17h-1zM916 800h1v11h-1zM917 795h1v17h-1zM918 792h1v19h-1zM919 793h1v25h-1zM920 794h1v17h-1zM921 786h1v19h-1zM922 789h1v33h-1zM923 792h1v13h-1zM924 803h1v13h-1zM925 798h1v6h-1zM926 784h1v31h-1zM927 795h1v19h-1zM928 797h1v7h-1zM929 799h1v14h-1zM930 788h1v17h-1zM931 792h1v16h-1zM932 793h1v12h-1zM933 803h1v5h-1zM934 799h1v15h-1zM935 797h1v20h-1zM936 796h1v12h-1zM937 794h1v16h-1zM938 798h1v16h-1zM939 793h1v16h-1zM940 794h1v18h-1zM941 797h1v11h-1zM942 786h1v17h-1zM943 796h1v8h-1zM944 794h1v10h-1zM945 798h1v9h-1zM946 794h1v14h-1zM947 797h1v17h-1zM948 788h1v20h-1zM949 800h1v12h-1zM950 795h1v16h-1zM951 799h1v16h-1zM952 803h1v12h-1zM953 800h1v14h-1zM954 800h1v15h-1zM955 800h1v23h-1zM956 796h1v11h-1zM957 801h1v5h-1zM958 795h1v16h-1zM959 800h1v17h-1zM960 788h1v29h-1zM961 792h1v21h-1zM962 797h1v9h-1zM963 798h1v12h-1zM964 799h1v12h-1zM965 795h1v19h-1zM966 788h1v20h-1zM967 795h1v25h-1zM968 798h1v16h-1zM969 798h1v8h-1zM970 793h1v11h-1zM971 793h1v9h-1zM972 791h1v10h-1zM973 786h1v29h-1zM974 794h1v22h-1zM975 795h1v15h-1zM976 799h1v23h-1zM977 796h1v6h-1zM978 794h1v10h-1zM979 792h1v12h-1zM980 798h1v6h-1zM981 798h1v27h-1zM982 791h1v14h-1zM983 796h1v8h-1zM984 796h1v8h-1zM985 793h1v27h-1zM986 790h1v12h-1zM987 796h1v23h-1zM988 793h1v24h-1zM989 799h1v13h-1zM990 798h1v13h-1zM991 795h1v18h-1zM992 797h1v16h-1zM993 797h1v16h-1zM994 800h1v20h-1zM995 800h1v10h-1zM996 792h1v13h-1zM997 792h1v14h-1zM998 802h1v10h-1zM999 795h1v15h-1zM1000 794h1v10h-1zM1001 796h1v23h-1zM1002 794h1v18h-1zM1003 803h1v12h-1zM1004 791h1v19h-1zM1005 788h1v15h-1zM1006 795h1v12h-1zM1007 797h1v10h-1zM1008 793h1v19h-1zM1009 800h1v13h-1zM1010 797h1v12h-1zM1011 801h1v11h-1zM1012 794h1v11h-1zM1013 794h1v9h-1zM1014 799h1v12h-1zM1015 794h1v20h-1zM1016 792h1v17h-1zM1017 800h1v9h-1zM1018 797h1v15h-1zM1019 794h1v16h-1zM1020 794h1v17h-1zM1021 797h1v7h-1zM1022 798h1v13h-1zM1023 805h1v7h-1zM1024 795h1v15h-1zM1025 794h1v25h-1zM1026 800h1v11h-1zM1027 797h1v14h-1zM1028 799h1v7h-1zM1029 797h1v18h-1zM1030 802h1v13h-1zM1031 790h1v20h-1zM1032 800h1v10h-1zM1033 795h1v19h-1zM1034 793h1v24h-1zM1035 803h1v16h-1zM1036 802h1v17h-1zM1037 800h1v10h-1zM1038 799h1v15h-1zM1039 803h1v18h-1zM1040 791h1v22h-1zM1041 797h1v21h-1zM1042 795h1v14h-1zM1043 798h1v18h-1zM1044 795h1v10h-1zM1045 802h1v12h-1zM1046 799h1v11h-1zM1047 800h1v18h-1zM1048 797h1v14h-1zM1049 795h1v20h-1zM1050 799h1v17h-1zM1051 796h1v24h-1zM1052 796h1v12h-1zM1053 796h1v18h-1zM1054 798h1v18h-1zM1055 795h1v29h-1zM1056 799h1v18h-1zM1057 799h1v16h-1zM1058 797h1v16h-1zM1059 797h1v20h-1zM1060 802h1v20h-1zM1061 795h1v17h-1zM1062 796h1v23h-1zM1063 803h1v17h-1zM1064 795h1v12h-1zM1065 799h1v16h-1zM1066 794h1v21h-1zM1067 794h1v22h-1zM1068 794h1v14h-1zM1069 799h1v24h-1zM1070 796h1v20h-1zM1071 794h1v22h-1zM1072 800h1v12h-1zM1073 805h1v13h-1zM1074 803h1v17h-1zM1075 797h1v15h-1zM1076 797h1v15h-1zM1077 803h1v20h-1zM1078 798h1v17h-1zM1079 802h1v19h-1zM1080 800h1v16h-1zM1081 791h1v19h-1zM1082 795h1v15h-1zM1083 803h1v14h-1zM1084 798h1v19h-1zM1085 795h1v22h-1zM1086 795h1v21h-1zM1087 802h1v13h-1zM1088 799h1v14h-1zM1089 796h1v11h-1zM1090 799h1v18h-1zM1091 797h1v13h-1zM1092 798h1v25h-1zM1093 799h1v12h-1zM1094 794h1v25h-1zM1095 794h1v18h-1zM1096 799h1v18h-1zM1097 801h1v9h-1zM1098 796h1v21h-1zM1099 799h1v17h-1zM1100 797h1v24h-1zM1101 798h1v15h-1zM1102 801h1v12h-1zM1103 791h1v20h-1zM1104 791h1v17h-1zM1105 799h1v13h-1zM1106 797h1v15h-1zM1107 802h1v18h-1zM1108 803h1v18h-1zM1109 794h1v20h-1zM1110 800h1v20h-1zM1111 797h1v16h-1zM1112 795h1v21h-1zM1113 796h1v21h-1zM1114 797h1v22h-1zM1115 801h1v26h-1zM1116 797h1v31h-1zM1117 802h1v20h-1zM1118 801h1v18h-1zM1119 793h1v24h-1zM1120 801h1v16h-1zM1121 797h1v18h-1zM1122 799h1v29h-1zM1123 790h1v23h-1zM1124 794h1v19h-1zM1125 797h1v20h-1zM1126 798h1v12h-1zM1127 791h1v22h-1zM1128 796h1v31h-1zM1129 796h1v10h-1zM1130 805h1v16h-1zM1131 798h1v24h-1zM1132 790h1v25h-1zM1133 802h1v17h-1zM1134 796h1v25h-1zM1135 800h1v25h-1zM1136 799h1v18h-1zM1137 796h1v19h-1zM1138 803h1v14h-1zM1139 798h1v16h-1zM1140 799h1v19h-1zM1141 799h1v21h-1zM1142 797h1v22h-1zM1143 798h1v12h-1zM1144 795h1v26h-1zM1145 800h1v24h-1zM1146 799h1v23h-1zM1147 798h1v20h-1zM1148 795h1v27h-1zM1149 800h1v26h-1zM1150 795h1v20h-1zM1151 799h1v16h-1zM1152 796h1v19h-1zM1153 800h1v13h-1zM1154 801h1v13h-1zM1155 796h1v17h-1zM1156 800h1v24h-1zM1157 793h1v26h-1zM1158 795h1v26h-1zM1159 798h1v17h-1zM1160 797h1v27h-1zM1161 797h1v16h-1zM1162 794h1v27h-1zM1163 799h1v27h-1zM1164 798h1v22h-1zM1165 797h1v12h-1zM1166 799h1v15h-1zM1167 792h1v31h-1zM1168 798h1v17h-1zM1169 799h1v17h-1zM1170 794h1v25h-1zM1171 802h1v23h-1zM1172 801h1v20h-1zM1173 790h1v25h-1zM1174 789h1v36h-1zM1175 802h1v23h-1zM1176 797h1v21h-1zM1177 795h1v14h-1zM1178 797h1v29h-1zM1179 796h1v17h-1zM1180 799h1v13h-1zM1181 802h1v14h-1zM1182 796h1v24h-1zM1183 796h1v25h-1zM1184 798h1v17h-1zM1185 797h1v14h-1zM1186 796h1v21h-1zM1187 795h1v25h-1zM1188 794h1v23h-1zM1189 796h1v25h-1zM1190 799h1v21h-1zM1191 796h1v18h-1zM1192 790h1v20h-1zM1193 803h1v11h-1zM1194 799h1v16h-1zM1195 798h1v18h-1zM1196 796h1v22h-1zM1197 795h1v21h-1zM1198 791h1v25h-1zM1199 791h1v25h-1zM1200 795h1v26h-1zM1201 795h1v14h-1zM1202 799h1v18h-1zM1203 795h1v26h-1zM1204 801h1v17h-1zM1205 792h1v26h-1zM1206 799h1v13h-1zM1207 799h1v19h-1zM1208 795h1v14h-1zM1209 796h1v23h-1zM1210 793h1v26h-1zM1211 798h1v21h-1zM1212 796h1v26h-1zM1213 798h1v15h-1zM1214 800h1v17h-1zM1215 796h1v24h-1zM1216 794h1v26h-1zM1217 792h1v21h-1zM1218 798h1v24h-1zM1219 799h1v17h-1zM1220 796h1v22h-1zM1221 798h1v18h-1zM1222 805h1v13h-1zM1223 799h1v26h-1zM1224 795h1v21h-1zM1225 799h1v26h-1zM1226 794h1v21h-1zM1227 797h1v17h-1zM1228 797h1v15h-1zM1229 797h1v18h-1zM1230 797h1v19h-1zM1231 798h1v18h-1zM1232 794h1v27h-1zM1233 796h1v26h-1zM1234 792h1v19h-1zM1235 795h1v27h-1zM1236 800h1v24h-1zM1237 798h1v26h-1zM1238 798h1v26h-1zM1239 795h1v19h-1zM1240 793h1v30h-1zM1241 795h1v28h-1zM1242 800h1v24h-1zM1243 798h1v19h-1zM1244 795h1v24h-1zM1245 793h1v24h-1zM1246 797h1v21h-1zM1247 796h1v24h-1zM1248 793h1v23h-1zM1249 796h1v14h-1zM1250 796h1v26h-1zM1251 795h1v29h-1zM1252 797h1v21h-1zM1253 800h1v24h-1zM1254 788h1v25h-1zM1255 791h1v31h-1zM1256 792h1v28h-1zM1257 798h1v22h-1zM1258 800h1v19h-1zM1259 798h1v20h-1zM1260 797h1v25h-1zM1261 798h1v21h-1zM1262 799h1v22h-1zM1263 791h1v26h-1zM1264 800h1v16h-1zM1265 796h1v23h-1zM1266 799h1v15h-1zM1267 798h1v24h-1zM1268 803h1v20h-1zM1269 800h1v20h-1zM1270 793h1v28h-1zM1271 795h1v32h-1zM1272 791h1v31h-1zM1273 800h1v15h-1zM1274 799h1v14h-1zM1275 791h1v27h-1zM1276 793h1v24h-1zM1277 798h1v20h-1zM1278 792h1v29h-1zM1279 793h1v18h-1zM1280 793h1v21h-1zM1281 797h1v20h-1zM1282 797h1v23h-1zM1283 797h1v25h-1zM1284 796h1v20h-1zM1285 796h1v25h-1zM1286 797h1v24h-1zM1287 798h1v24h-1zM1288 794h1v27h-1zM1289 795h1v19h-1zM1290 790h1v33h-1zM1291 794h1v25h-1zM1292 793h1v24h-1zM1293 797h1v18h-1zM1294 797h1v23h-1zM1295 794h1v36h-1zM1296 792h1v24h-1zM1297 797h1v31h-1zM1298 798h1v17h-1zM1299 797h1v18h-1zM1300 797h1v17h-1zM1301 799h1v28h-1zM1302 796h1v16h-1zM1303 794h1v24h-1zM1304 797h1v16h-1zM1305 795h1v22h-1zM1306 798h1v22h-1zM1307 795h1v28h-1zM1308 793h1v22h-1zM1309 800h1v17h-1zM1310 794h1v29h-1zM1311 801h1v17h-1zM1312 792h1v22h-1zM1313 798h1v22h-1zM1314 794h1v34h-1zM1315 794h1v25h-1zM1316 796h1v22h-1zM1317 794h1v21h-1zM1318 795h1v25h-1zM1319 793h1v23h-1zM1320 797h1v20h-1zM1321 792h1v32h-1zM1322 798h1v29h-1zM1323 794h1v26h-1zM1324 792h1v26h-1zM1325 794h1v29h-1zM1326 790h1v19h-1zM1327 798h1v19h-1zM1328 796h1v34h-1zM1329 790h1v34h-1zM1330 795h1v26h-1zM1331 796h1v20h-1zM1332 796h1v24h-1zM1333 796h1v20h-1zM1334 795h1v23h-1zM1335 799h1v21h-1zM1336 794h1v25h-1zM1337 796h1v22h-1zM1338 801h1v17h-1zM1339 794h1v27h-1zM1340 793h1v20h-1zM1341 793h1v31h-1zM1342 795h1v28h-1zM1343 796h1v27h-1zM1344 797h1v19h-1zM1345 795h1v19h-1zM1346 792h1v32h-1zM1347 795h1v20h-1zM1348 791h1v20h-1zM1349 795h1v20h-1zM1350 784h1v40h-1zM1351 798h1v27h-1zM1352 794h1v26h-1zM1353 794h1v27h-1zM1354 799h1v17h-1zM1355 801h1v16h-1zM1356 798h1v20h-1zM1357 796h1v23h-1zM1358 801h1v20h-1zM1359 797h1v24h-1zM1360 798h1v19h-1zM1361 795h1v33h-1zM1362 797h1v29h-1zM1363 790h1v28h-1zM1364 799h1v26h-1zM1365 796h1v25h-1zM1366 793h1v26h-1zM1367 793h1v22h-1zM1368 794h1v25h-1zM1369 793h1v26h-1zM1370 798h1v21h-1zM1371 795h1v26h-1zM1372 798h1v24h-1zM1373 795h1v29h-1zM1374 798h1v27h-1zM1375 794h1v25h-1zM1376 794h1v30h-1zM1377 796h1v27h-1zM1378 796h1v29h-1zM1379 795h1v21h-1zM1380 794h1v25h-1zM1381 795h1v20h-1zM1382 794h1v26h-1zM1383 796h1v23h-1zM1384 800h1v16h-1zM1385 796h1v22h-1zM1386 799h1v13h-1zM1387 799h1v19h-1zM1388 795h1v21h-1zM1389 793h1v27h-1zM1390 797h1v25h-1zM1391 798h1v24h-1zM1392 794h1v28h-1zM1393 795h1v28h-1zM1394 798h1v21h-1zM1395 791h1v26h-1zM1396 797h1v36h-1zM1397 789h1v30h-1zM1398 793h1v24h-1zM1399 797h1v28h-1zM1400 799h1v26h-1zM1401 791h1v36h-1zM1402 797h1v29h-1zM1403 796h1v28h-1zM1404 796h1v25h-1zM1405 792h1v33h-1zM1406 797h1v24h-1zM1407 797h1v19h-1zM1408 796h1v26h-1zM1409 796h1v28h-1zM1410 795h1v28h-1zM1411 796h1v23h-1zM1412 793h1v45h-1zM1413 793h1v32h-1zM1414 796h1v22h-1zM1415 791h1v31h-1zM1416 795h1v27h-1zM1417 794h1v21h-1zM1418 798h1v25h-1zM1419 798h1v26h-1zM1420 793h1v31h-1zM1421 798h1v29h-1zM1422 799h1v20h-1zM1423 794h1v28h-1zM1424 795h1v31h-1zM1425 799h1v22h-1zM1426 791h1v38h-1zM1427 796h1v32h-1zM1428 795h1v31h-1zM1429 800h1v26h-1zM1430 796h1v32h-1zM1431 797h1v32h-1zM1432 799h1v32h-1zM1433 799h1v27h-1zM1434 792h1v37h-1zM1435 799h1v25h-1zM1436 792h1v24h-1zM1437 790h1v27h-1zM1438 794h1v27h-1zM1439 799h1v22h-1zM1440 792h1v28h-1zM1441 795h1v27h-1zM1442 799h1v18h-1zM1443 793h1v34h-1zM1444 792h1v28h-1zM1445 797h1v27h-1zM1446 800h1v23h-1zM1447 795h1v25h-1zM1448 796h1v26h-1zM1449 798h1v28h-1zM1450 793h1v28h-1zM1451 797h1v27h-1zM1452 798h1v20h-1zM1453 794h1v31h-1zM1454 796h1v23h-1zM1455 798h1v30h-1zM1456 798h1v25h-1zM1457 797h1v28h-1zM1458 795h1v31h-1zM1459 794h1v28h-1zM1460 794h1v31h-1zM1461 793h1v31h-1zM1462 791h1v28h-1zM1463 795h1v26h-1zM1464 794h1v28h-1zM1465 797h1v25h-1zM1466 797h1v25h-1zM1467 795h1v21h-1zM1468 796h1v26h-1zM1469 796h1v29h-1zM1470 793h1v33h-1zM1471 797h1v26h-1zM1472 797h1v21h-1zM1473 798h1v22h-1zM1474 796h1v24h-1zM1475 796h1v26h-1zM1476 795h1v28h-1zM1477 797h1v27h-1zM1478 798h1v31h-1zM1479 794h1v33h-1zM1480 799h1v33h-1zM1481 792h1v34h-1zM1482 798h1v27h-1zM1483 796h1v30h-1zM1484 799h1v32h-1zM1485 796h1v23h-1zM1486 795h1v24h-1zM1487 799h1v20h-1zM1488 796h1v30h-1zM1489 797h1v22h-1zM1490 795h1v30h-1zM1491 792h1v31h-1zM1492 795h1v28h-1zM1493 797h1v24h-1zM1494 792h1v27h-1zM1495 796h1v26h-1zM1496 796h1v26h-1zM1497 795h1v31h-1zM1498 799h1v25h-1zM1499 798h1v29h-1zM1500 796h1v30h-1zM1501 799h1v25h-1zM1502 799h1v25h-1zM1503 796h1v31h-1zM1504 795h1v25h-1zM1505 799h1v33h-1zM1506 796h1v33h-1zM1507 795h1v26h-1zM1508 799h1v23h-1zM1509 794h1v30h-1zM1510 797h1v29h-1zM1511 794h1v31h-1zM1512 798h1v28h-1zM1513 797h1v24h-1zM1514 795h1v24h-1zM1515 799h1v27h-1zM1516 799h1v23h-1zM1517 794h1v31h-1zM1518 797h1v30h-1zM1519 793h1v26h-1zM1520 800h1v23h-1zM1521 791h1v31h-1zM1522 794h1v36h-1zM1523 796h1v34h-1zM1524 797h1v33h-1zM1525 797h1v26h-1zM1526 795h1v28h-1zM1527 796h1v26h-1zM1528 798h1v29h-1zM1529 797h1v24h-1zM1530 796h1v30h-1zM1531 797h1v29h-1zM1532 793h1v42h-1zM1533 796h1v36h-1zM1534 797h1v28h-1zM1535 798h1v26h-1zM1536 797h1v25h-1zM1537 798h1v28h-1zM1538 794h1v31h-1zM1539 798h1v23h-1zM1540 794h1v28h-1zM1541 794h1v35h-1zM1542 795h1v29h-1zM1543 795h1v39h-1zM1544 795h1v32h-1zM1545 796h1v35h-1zM1546 794h1v37h-1zM1547 793h1v33h-1zM1548 794h1v44h-1zM1549 795h1v28h-1zM1550 792h1v32h-1zM1551 798h1v31h-1zM1552 797h1v27h-1zM1553 792h1v29h-1zM1554 794h1v27h-1zM1555 796h1v31h-1zM1556 797h1v23h-1zM1557 796h1v28h-1zM1558 799h1v30h-1zM1559 797h1v24h-1zM1560 792h1v26h-1zM1561 792h1v35h-1zM1562 798h1v31h-1zM1563 794h1v29h-1zM1564 797h1v29h-1zM1565 798h1v26h-1zM1566 795h1v30h-1zM1567 795h1v36h-1zM1568 791h1v41h-1zM1569 794h1v32h-1zM1570 795h1v33h-1zM1571 800h1v30h-1zM1572 797h1v27h-1zM1573 795h1v31h-1zM1574 798h1v23h-1zM1575 797h1v25h-1zM1576 796h1v29h-1zM1577 794h1v31h-1zM1578 795h1v31h-1zM1579 794h1v31h-1zM1580 796h1v27h-1zM1581 793h1v32h-1zM1582 797h1v32h-1zM1583 795h1v32h-1zM1584 798h1v27h-1zM1585 798h1v27h-1zM1586 792h1v29h-1zM1587 796h1v26h-1zM1588 796h1v31h-1zM1589 795h1v42h-1zM1590 795h1v33h-1zM1591 795h1v31h-1zM1592 801h1v25h-1zM1593 798h1v26h-1zM1594 798h1v31h-1zM1595 796h1v30h-1zM1596 792h1v33h-1zM1597 795h1v31h-1zM1598 793h1v31h-1zM1599 794h1v37h-1zM1600 796h1v30h-1zM1601 796h1v26h-1zM1602 793h1v29h-1zM1603 793h1v28h-1zM1604 798h1v29h-1zM1605 795h1v28h-1zM1606 793h1v45h-1zM1607 799h1v21h-1zM1608 795h1v31h-1zM1609 793h1v31h-1zM1610 799h1v24h-1zM1611 794h1v30h-1zM1612 793h1v45h-1zM1613 797h1v26h-1zM1614 799h1v23h-1zM1615 794h1v36h-1zM1616 796h1v31h-1zM1617 793h1v32h-1zM1618 795h1v25h-1zM1619 791h1v42h-1zM1620 799h1v30h-1zM1621 793h1v33h-1zM1622 794h1v37h-1zM1623 789h1v38h-1zM1624 800h1v30h-1zM1625 798h1v26h-1zM1626 798h1v25h-1zM1627 796h1v34h-1zM1628 793h1v29h-1zM1629 795h1v29h-1zM1630 793h1v40h-1zM1631 795h1v33h-1zM1632 796h1v29h-1zM1633 790h1v40h-1zM1634 795h1v32h-1zM1635 793h1v33h-1zM1636 797h1v27h-1zM1637 799h1v30h-1zM1638 795h1v30h-1zM1639 796h1v38h-1zM1640 793h1v30h-1zM1641 794h1v32h-1zM1642 798h1v34h-1zM1643 794h1v30h-1zM1644 796h1v28h-1zM1645 795h1v35h-1zM1646 794h1v36h-1zM1647 797h1v28h-1zM1648 794h1v30h-1zM1649 795h1v31h-1zM1650 796h1v29h-1zM1651 794h1v35h-1zM1652 797h1v28h-1zM1653 796h1v31h-1zM1654 796h1v33h-1zM1655 798h1v40h-1zM1656 797h1v38h-1zM1657 795h1v34h-1zM1658 794h1v34h-1zM1659 795h1v26h-1zM1660 794h1v33h-1zM1661 796h1v36h-1zM1662 794h1v30h-1zM1663 793h1v41h-1zM1664 794h1v38h-1zM1665 794h1v39h-1zM1666 798h1v31h-1zM1667 798h1v29h-1zM1668 797h1v30h-1zM1669 797h1v35h-1zM1670 794h1v31h-1zM1671 797h1v31h-1zM1672 797h1v25h-1zM1673 799h1v28h-1zM1674 795h1v38h-1zM1675 796h1v32h-1zM1676 795h1v36h-1zM1677 795h1v31h-1zM1678 798h1v29h-1zM1679 797h1v27h-1zM1680 796h1v25h-1zM1681 797h1v31h-1zM1682 793h1v32h-1zM1683 794h1v31h-1zM1684 791h1v38h-1zM1685 796h1v35h-1zM1686 792h1v43h-1zM1687 793h1v33h-1zM1688 795h1v32h-1zM1689 797h1v32h-1zM1690 798h1v26h-1zM1691 795h1v33h-1zM1692 796h1v28h-1zM1693 799h1v24h-1zM1694 797h1v36h-1zM1695 796h1v33h-1zM1696 797h1v32h-1zM1697 793h1v31h-1zM1698 795h1v34h-1zM1699 794h1v32h-1zM1700 798h1v26h-1zM1701 797h1v29h-1zM1702 797h1v36h-1zM1703 794h1v35h-1zM1704 797h1v26h-1zM1705 791h1v37h-1zM1706 797h1v33h-1zM1707 798h1v34h-1zM1708 799h1v31h-1zM1709 797h1v33h-1zM1710 794h1v32h-1zM1711 797h1v33h-1zM1712 798h1v28h-1zM1713 795h1v33h-1zM1714 797h1v27h-1zM1715 796h1v28h-1zM1716 796h1v29h-1zM1717 794h1v35h-1zM1718 795h1v33h-1zM1719 795h1v38h-1zM1720 794h1v35h-1zM1721 795h1v35h-1zM1722 795h1v37h-1zM1723 795h1v37h-1zM1724 799h1v29h-1zM1725 796h1v37h-1zM1726 796h1v32h-1zM1727 794h1v37h-1zM1728 799h1v27h-1zM1729 794h1v34h-1zM1730 795h1v33h-1zM1731 794h1v43h-1zM1732 791h1v36h-1zM1733 800h1v26h-1zM1734 792h1v33h-1zM1735 796h1v28h-1zM1736 797h1v31h-1zM1737 795h1v37h-1zM1738 797h1v33h-1zM1739 797h1v28h-1zM1740 795h1v35h-1zM1741 793h1v38h-1zM1742 791h1v35h-1zM1743 795h1v31h-1zM1744 796h1v35h-1zM1745 796h1v34h-1zM1746 795h1v34h-1zM1747 795h1v33h-1zM1748 792h1v48h-1zM1749 796h1v33h-1zM1750 799h1v33h-1zM1751 798h1v29h-1zM1752 794h1v40h-1zM1753 794h1v33h-1zM1754 797h1v28h-1zM1755 797h1v31h-1zM1756 794h1v35h-1zM1757 799h1v33h-1zM1758 798h1v35h-1zM1759 798h1v29h-1zM1760 796h1v28h-1zM1761 796h1v41h-1zM1762 795h1v32h-1zM1763 798h1v41h-1zM1764 799h1v28h-1zM1765 798h1v32h-1zM1766 799h1v33h-1zM1767 796h1v35h-1zM1768 803h1v32h-1zM1769 802h1v36h-1zM1770 806h1v38h-1zM1771 803h1v29h-1zM1772 803h1v39h-1zM1773 805h1v37h-1z" fill="#00ff00" shape-rendering="crispEdges"/>
<rect x="100" y="206" width="1" height="768" fill="#d0d000" />
<rect x="98" y="205" width="1677" height="1" fill="#00a024" />
<rect x="98" y="974" width="1677" height="1" fill="#00a024" />
<rect x="98" y="205" width="1" height="770" fill="#00a024" />
<rect x="1774" y="205" width="1" height="770" fill="#00a024" />
<text x="61.26" y="212.80" font-size="18.6" fill="#111111" font-weight="normal" font-family="Liberation Sans" style="white-space:pre" textLength="29.24" lengthAdjust="spacing" >0.0</text>
<text x="42.44" y="298.24" font-size="18.6" fill="#111111" font-weight="normal" font-family="Liberation Sans" style="white-space:pre" textLength="48.06" lengthAdjust="spacing" >-20.0</text>
<text x="42.44" y="383.69" font-size="18.6" fill="#111111" font-weight="normal" font-family="Liberation Sans" style="white-space:pre" textLength="48.06" lengthAdjust="spacing" >-40.0</text>
<text x="42.44" y="469.13" font-size="18.6" fill="#111111" font-weight="normal" font-family="Liberation Sans" style="white-space:pre" textLength="48.06" lengthAdjust="spacing" >-60.0</text>
<text x="42.44" y="554.58" font-size="18.6" fill="#111111" font-weight="normal" font-family="Liberation Sans" style="white-space:pre" textLength="48.06" lengthAdjust="spacing" >-80.0</text>
<text x="29.82" y="640.02" font-size="18.6" fill="#111111" font-weight="normal" font-family="Liberation Sans" style="white-space:pre" textLength="60.68" lengthAdjust="spacing" >-100.0</text>
<text x="29.82" y="725.47" font-size="18.6" fill="#111111" font-weight="normal" font-family="Liberation Sans" style="white-space:pre" textLength="60.68" lengthAdjust="spacing" >-120.0</text>
<text x="29.82" y="810.91" font-size="18.6" fill="#111111" font-weight="normal" font-family="Liberation Sans" style="white-space:pre" textLength="60.68" lengthAdjust="spacing" >-140.0</text>
<text x="29.82" y="896.36" font-size="18.6" fill="#111111" font-weight="normal" font-family="Liberation Sans" style="white-space:pre" textLength="60.68" lengthAdjust="spacing" >-160.0</text>
<text x="29.82" y="981.80" font-size="18.6" fill="#111111" font-weight="normal" font-family="Liberation Sans" style="white-space:pre" textLength="60.68" lengthAdjust="spacing" >-180.0</text>
<text x="86.49" y="1003.70" font-size="18.6" fill="#111111" font-weight="normal" font-family="Liberation Sans" style="white-space:pre" textLength="23.60" lengthAdjust="spacing" >20</text>
<text x="302.74" y="1003.70" font-size="18.6" fill="#111111" font-weight="normal" font-family="Liberation Sans" style="white-space:pre" textLength="23.60" lengthAdjust="spacing" >50</text>
<text x="460.94" y="1003.70" font-size="18.6" fill="#111111" font-weight="normal" font-family="Liberation Sans" style="white-space:pre" textLength="35.50" lengthAdjust="spacing" >100</text>
<text x="624.86" y="1003.70" font-size="18.6" fill="#111111" font-weight="normal" font-family="Liberation Sans" style="white-space:pre" textLength="35.16" lengthAdjust="spacing" >200</text>
<text x="841.12" y="1003.70" font-size="18.6" fill="#111111" font-weight="normal" font-family="Liberation Sans" style="white-space:pre" textLength="35.96" lengthAdjust="spacing" >500</text>
<text x="1010.70" y="1003.70" font-size="18.6" fill="#111111" font-weight="normal" font-family="Liberation Sans" style="white-space:pre" textLength="23.50" lengthAdjust="spacing" >1k</text>
<text x="1175.57" y="1003.70" font-size="18.6" fill="#111111" font-weight="normal" font-family="Liberation Sans" style="white-space:pre" textLength="22.06" lengthAdjust="spacing" >2k</text>
<text x="1392.08" y="1003.70" font-size="18.6" fill="#111111" font-weight="normal" font-family="Liberation Sans" style="white-space:pre" textLength="22.34" lengthAdjust="spacing" >5k</text>
<text x="1549.38" y="1003.70" font-size="18.6" fill="#111111" font-weight="normal" font-family="Liberation Sans" style="white-space:pre" textLength="34.45" lengthAdjust="spacing" >10k</text>
<text x="1714.48" y="1003.70" font-size="18.6" fill="#111111" font-weight="normal" font-family="Liberation Sans" style="white-space:pre" textLength="33.34" lengthAdjust="spacing" >20k</text>
<text x="99.64" y="194.70" font-size="22.5" fill="#111111" font-weight="normal" font-family="Liberation Sans" style="white-space:pre" textLength="302.30" lengthAdjust="spacing" >Spectrum magnitude (dBFS)</text>
<text x="1658.82" y="197.10" font-size="19.3" fill="#111111" font-weight="normal" font-family="Liberation Sans" style="white-space:pre" textLength="114.86" lengthAdjust="spacing" >Left  Avg:10</text>
<text x="1786.5" y="223.6" font-size="18.3" fill="#111111" text-anchor="middle" font-family="Liberation Sans">A</text>
<text x="1786.5" y="244.7" font-size="18.3" fill="#111111" text-anchor="middle" font-family="Liberation Sans">R</text>
<text x="1786.5" y="265.8" font-size="18.3" fill="#111111" text-anchor="middle" font-family="Liberation Sans">T</text>
<text x="1786.5" y="286.9" font-size="18.3" fill="#111111" text-anchor="middle" font-family="Liberation Sans">A</text>
<text x="98.36" y="1026.75" font-size="19" fill="#111111" font-weight="normal" font-family="Liberation Sans" style="white-space:pre" textLength="278.58" lengthAdjust="spacing" >Cursor: 20.14 Hz, -129.77 dB</text>
<text x="98.05" y="1054.70" font-size="19" fill="#cc1010" font-weight="normal" font-family="Liberation Sans" style="white-space:pre" textLength="64.71" lengthAdjust="spacing" >RMS =</text>
<text x="175.26" y="1054.70" font-size="19" fill="#cc1010" font-weight="normal" font-family="Liberation Sans" style="white-space:pre" textLength="107.50" lengthAdjust="spacing" >-98.3 dBFS</text>
<text x="296.16" y="1054.70" font-size="19" fill="#cc1010" font-weight="normal" font-family="Liberation Sans" style="white-space:pre" textLength="143.80" lengthAdjust="spacing" >THD =100.00%</text>
<text x="453.44" y="1054.70" font-size="19" fill="#cc1010" font-weight="normal" font-family="Liberation Sans" style="white-space:pre" textLength="171.70" lengthAdjust="spacing" >THD+N =100.00%</text>
<text x="1721.54" y="1026.90" font-size="19" fill="#111111" font-weight="normal" font-family="Liberation Sans" style="white-space:pre" textLength="52.40" lengthAdjust="spacing" >F(Hz)</text>
<rect x="1871" y="140" width="49" height="1" fill="#808080" />
<rect x="1871" y="141" width="49" height="1" fill="#ffffff" />
<rect x="1871" y="141" width="1" height="921" fill="#ffffff" />
<text x="1886.60" y="156.00" font-size="11.5" fill="#000" font-weight="normal" font-family="Liberation Sans" style="white-space:pre" textLength="16.10" lengthAdjust="spacingAndGlyphs"  stroke="#000" stroke-width="0.35">Top</text>
<rect x="1887" y="164" width="16" height="17" fill="#d4d0c8" />
<rect x="1887" y="164" width="16" height="1" fill="#ffffff" />
<rect x="1887" y="164" width="1" height="17" fill="#ffffff" />
<rect x="1887" y="180" width="16" height="1" fill="#404040" />
<rect x="1902" y="164" width="1" height="17" fill="#404040" />
<rect x="1888" y="179" width="14" height="1" fill="#808080" />
<rect x="1901" y="165" width="1" height="15" fill="#808080" />
<path d="M1890.0 173.0 H1897.0 L1893.5 169.5 Z" fill="#000"/>
<rect x="1887" y="181" width="16" height="17" fill="#d4d0c8" />
<rect x="1887" y="181" width="16" height="1" fill="#ffffff" />
<rect x="1887" y="181" width="1" height="17" fill="#ffffff" />
<rect x="1887" y="197" width="16" height="1" fill="#404040" />
<rect x="1902" y="181" width="1" height="17" fill="#404040" />
<rect x="1888" y="196" width="14" height="1" fill="#808080" />
<rect x="1901" y="182" width="1" height="15" fill="#808080" />
<path d="M1890.0 186.0 H1897.0 L1893.5 189.5 Z" fill="#000"/>
<rect x="1880" y="208" width="30" height="20" fill="#d4d0c8" />
<rect x="1880" y="208" width="30" height="1" fill="#ffffff" />
<rect x="1880" y="208" width="1" height="20" fill="#ffffff" />
<rect x="1880" y="227" width="30" height="1" fill="#404040" />
<rect x="1909" y="208" width="1" height="20" fill="#404040" />
<rect x="1881" y="226" width="28" height="1" fill="#808080" />
<rect x="1908" y="209" width="1" height="18" fill="#808080" />
<text x="1888.26" y="221.90" font-size="11.5" fill="#000" font-weight="normal" font-family="Liberation Sans" style="white-space:pre" textLength="11.44" lengthAdjust="spacingAndGlyphs"  stroke="#000" stroke-width="0.35">Fit</text>
<text x="1879.44" y="252.80" font-size="11.5" fill="#000" font-weight="normal" font-family="Liberation Sans" style="white-space:pre" textLength="30.26" lengthAdjust="spacingAndGlyphs"  stroke="#000" stroke-width="0.35">Range</text>
<rect x="1887" y="260" width="16" height="17" fill="#d4d0c8" />
<rect x="1887" y="260" width="16" height="1" fill="#ffffff" />
<rect x="1887" y="260" width="1" height="17" fill="#ffffff" />
<rect x="1887" y="276" width="16" height="1" fill="#404040" />
<rect x="1902" y="260" width="1" height="17" fill="#404040" />
<rect x="1888" y="275" width="14" height="1" fill="#808080" />
<rect x="1901" y="261" width="1" height="15" fill="#808080" />
<path d="M1890.0 269.0 H1897.0 L1893.5 265.5 Z" fill="#000"/>
<rect x="1887" y="277" width="16" height="17" fill="#d4d0c8" />
<rect x="1887" y="277" width="16" height="1" fill="#ffffff" />
<rect x="1887" y="277" width="1" height="17" fill="#ffffff" />
<rect x="1887" y="293" width="16" height="1" fill="#404040" />
<rect x="1902" y="277" width="1" height="17" fill="#404040" />
<rect x="1888" y="292" width="14" height="1" fill="#808080" />
<rect x="1901" y="278" width="1" height="15" fill="#808080" />
<path d="M1890.0 282.0 H1897.0 L1893.5 285.5 Z" fill="#000"/>
<rect x="1880" y="309" width="30" height="21" fill="#d4d0c8" />
<rect x="1880" y="309" width="30" height="1" fill="#ffffff" />
<rect x="1880" y="309" width="1" height="21" fill="#ffffff" />
<rect x="1880" y="329" width="30" height="1" fill="#404040" />
<rect x="1909" y="309" width="1" height="21" fill="#404040" />
<rect x="1881" y="328" width="28" height="1" fill="#808080" />
<rect x="1908" y="310" width="1" height="19" fill="#808080" />
<text x="1886.80" y="323.00" font-size="11.5" fill="#000" font-weight="normal" font-family="Liberation Sans" style="white-space:pre" textLength="14.36" lengthAdjust="spacingAndGlyphs"  stroke="#000" stroke-width="0.35">Set</text>
<text x="1878.80" y="356.00" font-size="11.5" fill="#000" font-weight="normal" font-family="Liberation Sans" style="white-space:pre" textLength="31.70" lengthAdjust="spacingAndGlyphs"  stroke="#000" stroke-width="0.35">FrHigh</text>
<rect x="1880" y="363" width="14" height="17" fill="#d4d0c8" />
<rect x="1880" y="363" width="14" height="1" fill="#ffffff" />
<rect x="1880" y="363" width="1" height="17" fill="#ffffff" />
<rect x="1880" y="379" width="14" height="1" fill="#404040" />
<rect x="1893" y="363" width="1" height="17" fill="#404040" />
<rect x="1881" y="378" width="12" height="1" fill="#808080" />
<rect x="1892" y="364" width="1" height="15" fill="#808080" />
<path d="M1887.0 367.5 V374.5 L1883.5 371.0 Z" fill="#000"/>
<rect x="1894" y="363" width="16" height="17" fill="#d4d0c8" />
<rect x="1894" y="363" width="16" height="1" fill="#ffffff" />
<rect x="1894" y="363" width="1" height="17" fill="#ffffff" />
<rect x="1894" y="379" width="16" height="1" fill="#404040" />
<rect x="1909" y="363" width="1" height="17" fill="#404040" />
<rect x="1895" y="378" width="14" height="1" fill="#808080" />
<rect x="1908" y="364" width="1" height="15" fill="#808080" />
<path d="M1900.0 367.5 V374.5 L1903.5 371.0 Z" fill="#000"/>
<text x="1881.80" y="401.00" font-size="11.5" fill="#000" font-weight="normal" font-family="Liberation Sans" style="white-space:pre" textLength="28.90" lengthAdjust="spacingAndGlyphs"  stroke="#000" stroke-width="0.35">FrLow</text>
<rect x="1880" y="408" width="14" height="16" fill="#d4d0c8" />
<rect x="1880" y="408" width="14" height="1" fill="#ffffff" />
<rect x="1880" y="408" width="1" height="16" fill="#ffffff" />
<rect x="1880" y="423" width="14" height="1" fill="#404040" />
<rect x="1893" y="408" width="1" height="16" fill="#404040" />
<rect x="1881" y="422" width="12" height="1" fill="#808080" />
<rect x="1892" y="409" width="1" height="14" fill="#808080" />
<path d="M1887.0 412.0 V419.0 L1883.5 415.5 Z" fill="#000"/>
<rect x="1894" y="408" width="16" height="16" fill="#d4d0c8" />
<rect x="1894" y="408" width="16" height="1" fill="#ffffff" />
<rect x="1894" y="408" width="1" height="16" fill="#ffffff" />
<rect x="1894" y="423" width="16" height="1" fill="#404040" />
<rect x="1909" y="408" width="1" height="16" fill="#404040" />
<rect x="1895" y="422" width="14" height="1" fill="#808080" />
<rect x="1908" y="409" width="1" height="14" fill="#808080" />
<path d="M1900.0 412.0 V419.0 L1903.5 415.5 Z" fill="#000"/>
<rect x="1872" y="1060" width="48" height="1" fill="#808080" />
<rect x="0" y="1061" width="1920" height="1" fill="#ffffff" />
<text x="2.80" y="1076.70" font-size="11.5" fill="#000" font-weight="normal" font-family="Liberation Sans" style="white-space:pre" textLength="29.90" lengthAdjust="spacingAndGlyphs"  stroke="#000" stroke-width="0.35">Ready</text>
<rect x="1758" y="1064" width="56" height="1" fill="#808080" />
<rect x="1758" y="1064" width="1" height="17" fill="#808080" />
<rect x="1813" y="1064" width="1" height="17" fill="#ffffff" />
<rect x="1758" y="1079" width="56" height="1" fill="#ffffff" />
<rect x="1816" y="1064" width="55" height="1" fill="#808080" />
<rect x="1816" y="1064" width="1" height="17" fill="#808080" />
<rect x="1870" y="1064" width="1" height="17" fill="#ffffff" />
<rect x="1816" y="1079" width="55" height="1" fill="#ffffff" />
<rect x="1874" y="1064" width="46" height="1" fill="#808080" />
<rect x="1874" y="1064" width="1" height="17" fill="#808080" />
<rect x="1919" y="1064" width="1" height="17" fill="#ffffff" />
<rect x="1874" y="1079" width="46" height="1" fill="#ffffff" />
<text x="1763.90" y="1076.90" font-size="11.5" fill="#000" font-weight="normal" font-family="Liberation Sans" style="white-space:pre" textLength="35.36" lengthAdjust="spacingAndGlyphs"  stroke="#000" stroke-width="0.35">L:-88.5</text>
<text x="1822.02" y="1076.90" font-size="11.5" fill="#000" font-weight="normal" font-family="Liberation Sans" style="white-space:pre" textLength="37.48" lengthAdjust="spacingAndGlyphs"  stroke="#000" stroke-width="0.35">R:-92.9</text>
<text x="1881.04" y="1076.90" font-size="11.5" fill="#000" font-weight="normal" font-family="Liberation Sans" style="white-space:pre" textLength="23.46" lengthAdjust="spacingAndGlyphs"  stroke="#000" stroke-width="0.35">dBFS</text></svg>
</body></html>
